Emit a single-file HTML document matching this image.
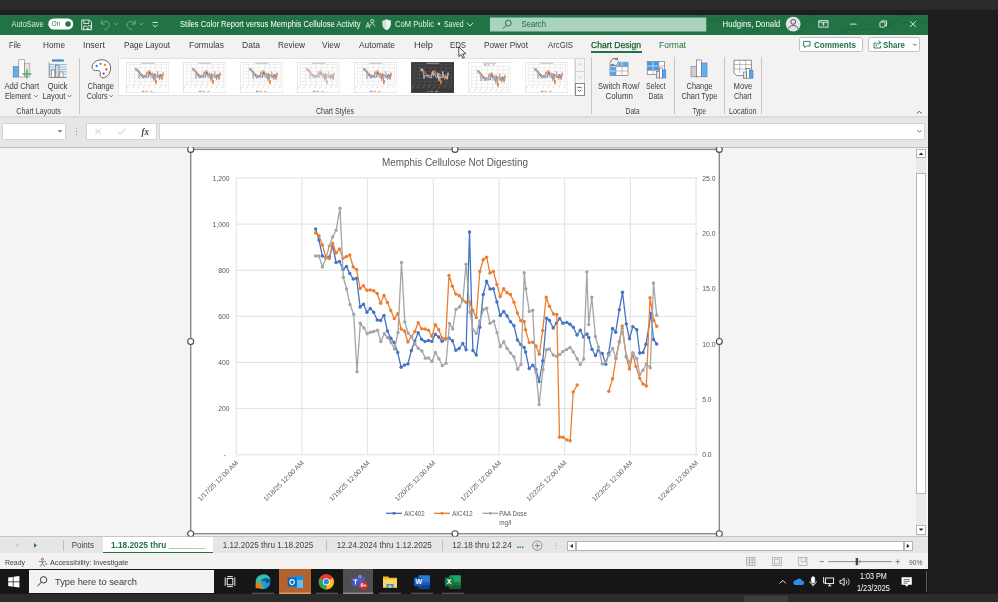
<!DOCTYPE html>
<html lang="en"><head><meta charset="utf-8"><title>Stiles Color Report versus Memphis Cellulose Activity - Excel</title>
<style>
html,body{margin:0;padding:0;}
body{width:998px;height:602px;overflow:hidden;background:#1e1e1e;position:relative;font-family:"Liberation Sans",sans-serif;}
.abs{position:absolute;}
.t{position:absolute;white-space:pre;display:inline-block;transform-origin:0 50%;}
div{position:absolute;box-sizing:border-box;}
</style></head><body>
<!-- desktop / outer frame -->
<div style="left:0;top:0;width:998px;height:9.7px;background:#2a2a2a"></div>
<div style="left:0;top:9.7px;width:998px;height:5px;background:#1e1e1e"></div>
<div style="left:928px;top:14.5px;width:70px;height:580px;background:#1e1e1e"></div>
<div style="left:0;top:594px;width:998px;height:8px;background:#2b2b2b"></div>
<div style="left:744px;top:596px;width:44px;height:6px;background:#3c3c3c"></div>
<!-- excel window -->
<div style="left:0;top:14.5px;width:928px;height:20.2px;background:#217346"></div>
<div style="left:0;top:34.7px;width:928px;height:81.5px;background:#f3f2f1"></div>
<div style="left:0;top:116.2px;width:928px;height:2px;background:linear-gradient(#d8d8d8,#e2e2e2)"></div>
<div style="left:0;top:118.2px;width:928px;height:29px;background:#e6e6e6"></div>
<div style="left:0;top:146.6px;width:928px;height:1px;background:#bdbdbd"></div>
<div style="left:0;top:147.6px;width:928px;height:389px;background:#f4f4f4"></div>
<div style="left:0;top:536.2px;width:928px;height:1px;background:#c6c6c6"></div>
<div style="left:0;top:537.2px;width:928px;height:16px;background:#e6e6e6"></div>
<div style="left:0;top:553.2px;width:928px;height:16px;background:#f3f2f1"></div>
<div style="left:0;top:569.2px;width:928px;height:24.8px;background:#161616"></div>
<!-- ===== title bar ===== -->
<svg class="abs" style="left:0;top:14.5px" width="928" height="20.2" viewBox="0 14.5 928 20.2">
 <g fill="none" stroke="#1d6a3f" stroke-width="1.2" opacity="0.9">
  <path d="M745 34.7 L760 27 L800 27 L815 14.5"/><path d="M835 34.7 L850 29 L880 29 L905 14.5"/><path d="M870 34.7 L895 22 L928 22"/><path d="M700 14.5 L712 20 L745 20"/>
 </g>
 <!-- autosave toggle -->
 <rect x="48" y="18" width="25" height="11" rx="5.5" fill="#fff"/><circle cx="67.8" cy="23.5" r="2.7" fill="#217346"/>
 <!-- save -->
 <g fill="none" stroke="#e6f0ea" stroke-width="0.9"><path d="M81.5 19.5 H89.3 L91.3 21.5 V29.2 H81.5 Z"/><path d="M83.6 19.5 V23 H88.6 V19.5"/><path d="M83.6 29.2 V25.6 H86.5"/><path d="M87 26.2 a2.2 2.2 0 0 1 4 0.2 M91.3 24.7 v1.9 h-1.9 M91 28 a2.2 2.2 0 0 1 -4 -0.2 M86.8 29.6 v-1.9 h1.9"/></g>
 <!-- undo / redo -->
 <g fill="none" stroke="#74aa8b" stroke-width="1"><path d="M101 19.8 V23.6 H104.8"/><path d="M101.2 23.4 C103.5 19.8 108.8 20.4 109.2 24.2 C109.4 26.4 107.4 27.6 104 29.6"/><path d="M113.8 22.6 l1.8 1.8 l1.8 -1.8"/>
 <path d="M135 19.8 V23.6 H131.2"/><path d="M134.8 23.4 C132.5 19.8 127.2 20.4 126.8 24.2 C126.6 26.4 128.6 27.6 132 29.6"/><path d="M139.2 22.6 l1.8 1.8 l1.8 -1.8"/></g>
 <g fill="none" stroke="#e6f0ea" stroke-width="0.9"><path d="M152.3 22 h5.4"/><path d="M152.6 24.2 l2.4 2.4 l2.4 -2.4"/></g>
 <!-- share people -->
 <g fill="none" stroke="#e6f0ea" stroke-width="0.8"><circle cx="372.2" cy="20.6" r="1.6"/><path d="M369.6 26 c0 -3.6 5.2 -3.6 5.2 0"/><path d="M365.8 27.6 l2 -5.6 l2 5.6 M366.6 25.8 h2.4"/></g>
 <!-- shield -->
 <path d="M386.4 18.8 c1.4 1 2.8 1.3 4.2 1.3 v4 c0 2.6 -1.8 4.6 -4.2 5.6 c-2.4 -1 -4.2 -3 -4.2 -5.6 v-4 c1.4 0 2.8 -0.3 4.2 -1.3 z" fill="#cfe3d7"/>
 <path d="M386.4 18.8 c1.4 1 2.8 1.3 4.2 1.3 v4 c0 2.6 -1.8 4.6 -4.2 5.6 z" fill="#eef6f1"/>
 <path d="M466.8 22.3 l3.2 3.2 l3.2 -3.2" fill="none" stroke="#e6f0ea" stroke-width="0.9"/>
 <!-- search -->
 <rect x="490" y="17" width="216.4" height="14" fill="#a9d3bc"/>
 <g fill="none" stroke="#1e6a40" stroke-width="0.9"><circle cx="508.4" cy="22.6" r="2.9"/><path d="M506.3 24.8 l-3.4 3.6"/></g>
 <!-- avatar -->
 <circle cx="793.4" cy="23.6" r="7.4" fill="#e3e3e3"/><g fill="none" stroke="#444" stroke-width="0.9"><circle cx="793.4" cy="21.4" r="2.4"/><path d="M788.8 28.4 c0.6 -4.6 8.6 -4.6 9.2 0"/></g>
 <!-- ribbon display -->
 <g fill="none" stroke="#e6f0ea" stroke-width="0.9"><rect x="819" y="20.2" width="9.2" height="6.4"/><path d="M819 21.8 h9.2"/><path d="M823.6 25.4 v-2.6 M822.3 23.9 l1.3 -1.3 l1.3 1.3"/></g>
 <!-- min / restore / close -->
 <g fill="none" stroke="#e6f0ea" stroke-width="0.9"><path d="M850.2 23.6 h6.6"/><rect x="880.2" y="21.6" width="5" height="5" rx="0.8"/><path d="M881.8 21.6 v-1.2 h5 v5 h-1.4"/><path d="M910.2 20.6 l6 6 M916.2 20.6 l-6 6"/></g>
</svg>
<!-- ===== menu bar ===== -->
<div style="left:591px;top:50.8px;width:50.6px;height:1.8px;background:#217346"></div>
<div style="left:798.7px;top:36.8px;width:64px;height:15.6px;background:#fff;border:1px solid #c2c0be;border-radius:2.5px"></div>
<div style="left:868px;top:36.8px;width:52.4px;height:15.6px;background:#fff;border:1px solid #c2c0be;border-radius:2.5px"></div>
<svg class="abs" style="left:798px;top:36px" width="126" height="18" viewBox="798 36 126 18">
 <path d="M803.6 41.4 h6.4 v4.6 h-3.6 l-1.6 1.6 v-1.6 h-1.2 z" fill="none" stroke="#217346" stroke-width="0.9" stroke-linejoin="round"/>
 <g fill="none" stroke="#217346" stroke-width="0.9"><path d="M876.4 43 h-2.4 v5 h6.6 v-2.2"/><path d="M876 46.4 c0.4 -2.6 2 -3.8 4.6 -3.8 M878.8 40.6 l2 2 l-2 2"/></g>
 <path d="M913.2 43.8 l1.7 1.7 l1.7 -1.7" fill="none" stroke="#217346" stroke-width="0.9"/>
</svg>
<!-- ===== ribbon ===== -->
<div style="left:79.3px;top:57.5px;width:1px;height:56.2px;background:#c8c6c4"></div>
<div style="left:591px;top:57px;width:1px;height:56.6px;background:#c8c6c4"></div>
<div style="left:674px;top:57px;width:1px;height:56.6px;background:#c8c6c4"></div>
<div style="left:723.6px;top:57px;width:1px;height:56.6px;background:#c8c6c4"></div>
<div style="left:760.6px;top:57px;width:1px;height:56.6px;background:#c8c6c4"></div>
<div style="left:118px;top:58px;width:456.5px;height:38px;background:#fff;border:0.5px solid #e4e2e0"></div>
<div style="left:574.5px;top:58px;width:10px;height:38px;background:#f6f5f4;border:0.5px solid #d6d4d2"></div>
<div style="left:574.5px;top:70.6px;width:10px;height:0.6px;background:#d6d4d2"></div>
<div style="left:574.5px;top:83.4px;width:10px;height:12.6px;background:#fff;border:0.7px solid #8a8886"></div>
<svg class="abs" style="left:0;top:55px" width="928" height="62" viewBox="0 55 928 62">
 <g fill="none" stroke-width="0.8"><path d="M577.6 65.4 l1.9 -1.9 l1.9 1.9" stroke="#bdbbb9"/><path d="M577.6 76.4 l1.9 1.9 l1.9 -1.9" stroke="#bdbbb9"/><path d="M577.3 87.4 h4.4" stroke="#444"/><path d="M577.5 89.6 l2 2 l2 -2" stroke="#444"/></g>
 <!-- chevrons on labels -->
 <g fill="none" stroke="#4a4a4a" stroke-width="0.8"><path d="M34.2 95.2 l1.7 1.7 l1.7 -1.7"/><path d="M67.8 95.2 l1.7 1.7 l1.7 -1.7"/><path d="M109.6 95.2 l1.7 1.7 l1.7 -1.7"/><path d="M916.9 113.6 l2.4 -2.4 l2.4 2.4" stroke-width="0.9"/></g>
 <!-- Add Chart Element -->
 <rect x="13.2" y="66.6" width="5.6" height="10.4" fill="#69afe5" stroke="#2b7cd3" stroke-width="0.6"/>
 <rect x="24.4" y="63.4" width="5.4" height="13.6" fill="#e1e1e1" stroke="#9a9a9a" stroke-width="0.6"/>
 <rect x="18.8" y="59.8" width="5.6" height="17.2" fill="#fff" stroke="#7a7a7a" stroke-width="0.6"/>
 <path d="M26.9 69.6 v8.8 M22.5 74 h8.8" stroke="#4ea66a" stroke-width="1.5" fill="none"/>
 <!-- Quick Layout -->
 <rect x="52" y="59.4" width="11.8" height="2.2" fill="#3f8ad8"/>
 <g stroke="#6aaeea" stroke-width="0.8" fill="none"><path d="M49.5 64.6 h17.2 M49.5 67 h17.2 M49.5 69.4 h17.2 M49.5 71.8 h17.2 M49.5 74.2 h17.2"/></g>
 <path d="M49.2 62.6 v14.8 h17.8" stroke="#6f6f6f" stroke-width="0.8" fill="none"/>
 <rect x="51.6" y="70" width="3.2" height="7.2" fill="#fff" stroke="#6f6f6f" stroke-width="0.6"/><rect x="55.6" y="65.2" width="3.4" height="12" fill="#d8d8d8" stroke="#6f6f6f" stroke-width="0.6"/><rect x="59.8" y="72" width="3.2" height="5.2" fill="#fff" stroke="#6f6f6f" stroke-width="0.6"/>
 <!-- palette -->
 <path d="M101.8 59.8 c5.4 0 8.8 3.6 8.8 8.2 c0 4.8 -3.4 9.8 -7.6 9.8 c-2.6 0 -3.4 -2 -2.8 -4 c0.6 -2.2 -0.6 -3.4 -2.6 -3.2 c-3 0.4 -5.6 -0.8 -5.6 -3.6 c0 -4 4.4 -7.2 9.800 -7.200 z" fill="#fff" stroke="#555" stroke-width="0.9"/>
 <circle cx="96.600" cy="66" r="1.15" fill="#2f7de1"/><circle cx="100.600" cy="63.800" r="1.15" fill="#3ca24c"/><circle cx="105" cy="65" r="1.15" fill="#ef8b23"/><circle cx="106.400" cy="69.400" r="1.15" fill="#e23a3a"/><circle cx="103.600" cy="73.600" r="1.15" fill="#8e2fb8"/>
 <!-- Switch Row/Column -->
 <rect x="610" y="62.2" width="18" height="13.2" fill="#fff" stroke="#5f5f5f" stroke-width="0.6"/>
 <rect x="610" y="62.200" width="18" height="4.400" fill="#5ea6e6"/><rect x="610" y="62.2" width="6" height="13.2" fill="#5ea6e6"/>
 <g stroke="#fff" stroke-width="0.6"><path d="M616 62.2 v4.4 M622 62.2 v4.4 M610 66.600 h6 M610 71 h6"/></g>
 <g stroke="#7c7c7c" stroke-width="0.5"><path d="M622 66.6 v8.8 M616 71 h12 M616 66.6 h12 M616 66.6 v8.8"/></g>
 <circle cx="614.6" cy="62" r="4.6" fill="#f3f2f1"/>
 <g fill="none" stroke="#4f4f4f" stroke-width="0.8"><path d="M610.8 62.6 a3.800 3.800 0 0 1 6.400 -3.200 M617.400 57.400 v2.200 h-2.200"/><path d="M618.400 61.400 a3.800 3.800 0 0 1 -6.400 3.200 M611.800 66.600 v-2.200 h2.200"/></g>
 <!-- Select Data -->
 <rect x="647.200" y="61.600" width="17.400" height="13" fill="#fff" stroke="#5f5f5f" stroke-width="0.6"/>
 <rect x="647.200" y="61.6" width="11.600" height="8.700" fill="#4a98e0"/>
 <g stroke="#fff" stroke-width="0.6"><path d="M653 61.600 v8.700 M647.200 66 h11.600"/></g>
 <g stroke="#7c7c7c" stroke-width="0.5"><path d="M658.800 61.600 v13 M653 70.300 v4.300 M647.200 70.300 h17.400 M658.800 66 h5.800"/></g>
 <rect x="656.400" y="71.600" width="3" height="6.400" fill="#e6e6e6" stroke="#5f5f5f" stroke-width="0.6"/><rect x="659.400" y="68" width="3.200" height="10" fill="#fff" stroke="#5f5f5f" stroke-width="0.6"/><rect x="662.600" y="70" width="3.200" height="8" fill="#5ea6e6" stroke="#2b7cd3" stroke-width="0.6"/>
 <!-- Change Chart Type -->
 <rect x="691" y="66.400" width="5.400" height="10.400" fill="#cfcfcf" stroke="#7c7c7c" stroke-width="0.6"/><rect x="696.400" y="60" width="5.200" height="16.800" fill="#fff" stroke="#5f5f5f" stroke-width="0.6"/><rect x="701.600" y="63" width="5.400" height="13.800" fill="#69afe5" stroke="#2b7cd3" stroke-width="0.6"/>
 <!-- Move Chart -->
 <path d="M734 60.200 h17.400 v15.400 h-14.800 l-2.600 -2.600 z" fill="#fff" stroke="#5f5f5f" stroke-width="0.7"/>
 <g stroke="#7c7c7c" stroke-width="0.5"><path d="M734 64.600 h17.400 M734 69 h17.400 M739.800 60.200 v13 M745.600 60.200 v10"/></g>
 <rect x="743.600" y="72" width="3" height="6.200" fill="#e6e6e6" stroke="#5f5f5f" stroke-width="0.6"/><rect x="746.600" y="68.400" width="3.200" height="9.800" fill="#fff" stroke="#5f5f5f" stroke-width="0.6"/><rect x="749.800" y="70.400" width="3.200" height="7.800" fill="#5ea6e6" stroke="#2b7cd3" stroke-width="0.6"/>
</svg>
<!-- ===== formula bar ===== -->
<div style="left:1.6px;top:123.3px;width:64.6px;border-radius:1.5px;height:17px;background:#fff;border:0.7px solid #d4d4d4"></div>
<div style="left:86.2px;top:123.3px;width:71px;height:17px;background:#fff;border:0.7px solid #d4d4d4"></div>
<div style="left:159.2px;top:123.3px;width:765.4px;height:17px;background:#fff;border:0.7px solid #d4d4d4"></div>
<svg class="abs" style="left:0;top:118px" width="928" height="29" viewBox="0 118 928 29">
 <path d="M57.800 130.200 h4.400 l-2.200 2.400 z" fill="#666"/>
 <g fill="#8a8a8a"><circle cx="76.600" cy="128.200" r="0.55"/><circle cx="76.600" cy="131.400" r="0.55"/><circle cx="76.600" cy="134.600" r="0.55"/></g>
 <g fill="none" stroke="#b9b9b9" stroke-width="0.8"><path d="M95.400 128.800 l5.400 5.400 M100.800 128.800 l-5.400 5.400"/><path d="M118.200 131.800 l2.200 2.400 l4.800 -5.400"/></g>
 <path d="M917.400 130.200 l2 2 l2 -2" fill="none" stroke="#555" stroke-width="0.9"/>
</svg>
<!-- ===== vertical scrollbar ===== -->
<div style="left:916.4px;top:148.6px;width:9.4px;height:387px;background:#e9e9e9"></div>
<div style="left:916.4px;top:149.2px;width:9.4px;height:9.2px;background:#fff;border:0.6px solid #b5b5b5"></div>
<div style="left:916.4px;top:172.6px;width:9.4px;height:321.8px;background:#fff;border:0.6px solid #b5b5b5"></div>
<div style="left:916.4px;top:525.2px;width:9.4px;height:9.600px;background:#fff;border:0.6px solid #b5b5b5"></div>
<svg class="abs" style="left:914px;top:148px" width="14" height="390" viewBox="914 148 14 390"><path d="M918.800 155 h4.600 l-2.300 -2.500 z M918.800 528.600 h4.600 l-2.300 2.500 z" fill="#222"/></svg>
<!-- ===== sheet tabs ===== -->
<div style="left:103.3px;top:537.2px;width:110px;height:16px;background:#fff;border-bottom:1.6px solid #217346"></div>
<div style="left:62.5px;top:539.6px;width:0.8px;height:11.4px;background:#bcbcbc"></div>
<div style="left:326.3px;top:539.6px;width:0.8px;height:11.4px;background:#bcbcbc"></div>
<div style="left:442.4px;top:539.6px;width:0.8px;height:11.4px;background:#bcbcbc"></div>
<div style="left:576px;top:541.1px;width:327.6px;height:9.7px;background:#fff;border:0.6px solid #b5b5b5"></div>
<div style="left:566.7px;top:541.1px;width:9.3px;height:9.7px;background:#fff;border:0.6px solid #b5b5b5"></div>
<div style="left:903.6px;top:541.1px;width:9.3px;height:9.7px;background:#fff;border:0.6px solid #b5b5b5"></div>
<svg class="abs" style="left:0;top:537px" width="928" height="33" viewBox="0 537 928 33">
 <path d="M18.200 543.200 l-2.600 2.200 l2.600 2.200 z" fill="#c2c2c2"/><path d="M34 543 l2.800 2.400 l-2.800 2.400 z" fill="#217346"/>
 <circle cx="537.300" cy="545.600" r="4.700" fill="none" stroke="#777" stroke-width="0.8"/><path d="M534.700 545.600 h5.200 M537.300 543 v5.200" stroke="#777" stroke-width="0.8"/>
 <g fill="#9a9a9a"><circle cx="556" cy="543" r="0.5"/><circle cx="556" cy="545.600" r="0.5"/><circle cx="556" cy="548.200" r="0.5"/></g>
 <path d="M572.800 543.800 v4.400 l-2.600 -2.200 z M906.800 543.800 v4.400 l2.600 -2.200 z" fill="#222"/>
 <!-- status icons -->
 <g fill="none" stroke="#555" stroke-width="0.75"><circle cx="42.4" cy="559.3" r="1.05"/><path d="M38.8 561.3 c2.4 0.7 4.8 0.7 7.2 0 M42.400 561.700 v1.800 l-2.400 3.100 M42.400 563.500 l2.400 3.100"/><path d="M45.200 563.200 l1.800 1.800 M47 563.200 l-1.800 1.800" stroke-width="0.6"/></g>
 <g fill="none" stroke="#a2a2a2" stroke-width="0.7"><rect x="746.600" y="557.400" width="8.400" height="8"/><path d="M749.400 557.400 v8 M752.200 557.400 v8 M746.600 560 h8.400 M746.600 562.800 h8.400"/>
 <rect x="772.400" y="557.400" width="9" height="8"/><rect x="774.400" y="559.200" width="5" height="4.600"/>
 <rect x="798.400" y="557.400" width="8.600" height="8"/><path d="M801.400 557.400 v4.400 h4 v-4.400"/></g>
 <g stroke="#666" stroke-width="0.7" fill="none"><path d="M819.600 561.600 h4.400"/><path d="M828 561.600 h64"/><path d="M895.400 561.600 h4.600 M897.700 559.300 v4.600"/></g>
 <rect x="855.700" y="558" width="2.400" height="7.200" fill="#444"/><path d="M860 559.800 v3.600" stroke="#666" stroke-width="0.6"/>
</svg>
<!-- ===== taskbar ===== -->
<div style="left:29.2px;top:569.6px;width:185.300px;height:23.4px;background:#f3f3f3"></div>
<div style="left:279.4px;top:569.2px;width:31.4px;height:24.800px;background:#b4622e"></div>
<div style="left:343px;top:569.2px;width:30.4px;height:24.800px;background:#4f4f4f"></div>
<div style="left:926px;top:571px;width:0.8px;height:21px;background:#5a5a5a"></div>
<svg class="abs" style="left:0;top:569px" width="928" height="25" viewBox="0 569 928 25">
 <g fill="#fff"><path d="M8.200 577.600 l4.600 -0.650 v4.500 h-4.600 z M13.500 576.850 l5.900 -0.850 v5.450 h-5.900 z M8.200 582.150 h4.600 v4.500 l-4.600 -0.650 z M13.500 582.150 h5.900 v5.450 l-5.900 -0.850 z"/></g>
 <g fill="none" stroke="#3a3a3a" stroke-width="1"><circle cx="43.600" cy="579.800" r="3.200"/><path d="M41.300 582.200 l-3.800 4"/></g>
 <!-- task view -->
 <g fill="none" stroke="#fff" stroke-width="0.9"><rect x="227.200" y="578.400" width="5.600" height="6.400"/><path d="M225.200 577.400 v8.400 M234.800 577.400 v8.400 M227.200 576.600 h5.600 M227.200 586.600 h5.600"/></g>
 <!-- edge -->
 <circle cx="263" cy="581.800" r="7.400" fill="#1b9de2"/><path d="M255.800 583 c0 -5 4 -8.600 8.400 -8.600 c3.800 0 6.400 2.600 6.200 5.600 c-2 -2.400 -8 -2.600 -9.600 1.600 c-1 2.600 0.400 5.600 3 6.800 c-4 0.600 -8 -1.800 -8 -5.400 z" fill="#35c1a0"/><path d="M260.800 581.600 c1.600 -4.200 7.600 -4 9.600 -1.600 c0 2.400 -2 3.600 -4.600 3.200 c0.600 -1.600 -1 -2.800 -2.600 -2.400 c-1.200 0.200 -2 0.400 -2.400 0.800 z" fill="#0c59a4"/>
 <rect x="255.600" y="583.400" width="7" height="4.800" rx="0.6" fill="#d9861a"/><rect x="257.600" y="582.200" width="3" height="1.600" fill="none" stroke="#d9861a" stroke-width="0.8"/>
 <!-- outlook -->
 <rect x="292.600" y="575.400" width="10.400" height="12.400" rx="1" fill="#1a8fe0"/><rect x="297" y="580" width="6" height="7.800" fill="#5cc0f4"/><rect x="287.600" y="577.600" width="9" height="9" rx="1" fill="#0b64b8"/><ellipse cx="292.100" cy="582.100" rx="2.200" ry="2.500" fill="none" stroke="#fff" stroke-width="1.100"/>
 <!-- chrome -->
 <circle cx="326.300" cy="581.800" r="7.600" fill="#e33b2e"/><path d="M326.300 581.800 L319.700 578 A7.600 7.600 0 0 0 326.600 589.400 Z" fill="#2da94f"/><path d="M326.300 581.800 L326.600 589.400 A7.600 7.600 0 0 0 332.900 578 Z" fill="#fcc31e"/><path d="M319.700 578 A7.600 7.600 0 0 1 332.900 578 L326.300 578 Z" fill="#e33b2e"/><circle cx="326.300" cy="581.800" r="3.500" fill="#fff"/><circle cx="326.300" cy="581.800" r="2.700" fill="#3b7ded"/>
 <!-- teams -->
 <circle cx="360" cy="576.800" r="2" fill="#7b83eb"/><circle cx="364.200" cy="578" r="1.500" fill="#5059c9"/><rect x="356.600" y="579" width="8" height="8" rx="1.600" fill="#5059c9"/><rect x="351.400" y="577.800" width="8.200" height="8.200" rx="1" fill="#4b53bc"/><path d="M353.400 580 h4.200 M355.500 580 v4.600" stroke="#fff" stroke-width="1" fill="none"/>
 <circle cx="363.600" cy="585.800" r="4.300" fill="#c8302e"/>
 <!-- explorer -->
 <path d="M383 576.400 h5 l1.400 1.400 h7.600 v9.800 h-14 z" fill="#f4b92a"/><rect x="383" y="579.400" width="14" height="8.200" fill="#fbd768"/><rect x="386.400" y="584" width="7.200" height="3.600" fill="#3c91e0"/><rect x="388.600" y="585.400" width="2.800" height="2.200" fill="#fbd768"/>
 <!-- word -->
 <rect x="418.600" y="575.200" width="11.400" height="13.200" rx="1" fill="#2b7cd3"/><rect x="418.600" y="581.800" width="11.400" height="3.400" fill="#185abd"/><rect x="418.600" y="585" width="11.400" height="3.400" fill="#103f91"/><rect x="414" y="577.600" width="8.600" height="8.600" rx="1" fill="#185abd"/>
 <!-- excel -->
 <rect x="449.400" y="575.200" width="11.400" height="13.200" rx="1" fill="#21a366"/><rect x="449.400" y="581.800" width="11.400" height="3.400" fill="#107c41"/><rect x="449.400" y="585" width="11.400" height="3.400" fill="#185c37"/><rect x="444.800" y="577.600" width="8.600" height="8.600" rx="1" fill="#107c41"/>
 <!-- underlines -->
 <g fill="#7a7a7a"><rect x="252" y="592.800" width="22" height="0.8"/><rect x="316" y="592.800" width="22" height="0.800"/><rect x="379" y="592.800" width="22" height="0.800"/><rect x="411" y="592.800" width="22" height="0.800"/><rect x="442" y="592.800" width="22" height="0.800"/></g>
 <rect x="279.400" y="592.600" width="31.400" height="1.200" fill="#e9a77c"/><rect x="343" y="592.600" width="30.400" height="1.200" fill="#9a9a9a"/>
 <!-- tray -->
 <path d="M779.800 583.400 l3 -3 l3 3" fill="none" stroke="#fff" stroke-width="0.9"/>
 <path d="M795.400 585 h6.600 a2.100 2.100 0 0 0 0.200 -4.200 a3 3 0 0 0 -5.600 -0.800 a2.500 2.500 0 0 0 -1.200 5 z" fill="#2a8ee6"/>
 <g fill="none" stroke="#fff" stroke-width="0.9"><rect x="811.600" y="576.800" width="3" height="6.200" rx="1.500" fill="#fff"/><path d="M810 581.400 c0 4 6.200 4 6.200 0 M813.100 584.400 v2"/>
 <rect x="825.600" y="578" width="8" height="5.600"/><path d="M828 585.800 h3.400 M829.600 583.600 v2.200 M823.600 577 v6 h2"/>
 <path d="M840 580.400 h1.800 l2.400 -2.200 v7.400 l-2.400 -2.200 h-1.800 z"/><path d="M846 579.800 c1 1 1 3.400 0 4.400 M847.800 578.400 c1.800 1.800 1.800 5.200 0 7" stroke-width="0.7"/></g>
 <path d="M901.600 577.200 h10.200 v7.600 h-3.400 l-1.700 1.900 l-1.700 -1.900 h-3.400 z" fill="#fff"/><path d="M903.600 579.600 h6.200 M903.600 581.400 h6.200 M903.600 583.200 h4" stroke="#161616" stroke-width="0.6"/>
</svg>
<span class="t" style="left:415.6px;top:578.3px;font-size:7px;line-height:7px;font-weight:bold;color:#fff">W</span>
<span class="t" style="left:446.8px;top:578.3px;font-size:7px;line-height:7px;font-weight:bold;color:#fff">X</span>
<span class="t" style="left:360.4px;top:583.2px;font-size:5.4px;line-height:5.4px;font-weight:bold;color:#fff">9+</span>

<svg class="abs" style="left:0;top:0;will-change:transform" width="998" height="602" viewBox="0 0 998 602"><rect x="190.7" y="149.4" width="528.6" height="384.3" fill="#fff" stroke="#8a8a8a" stroke-width="1.4"/><line x1="236.2" y1="178" x2="236.2" y2="454.8" stroke="#dedede" stroke-width="0.9"/><line x1="301.9" y1="178" x2="301.9" y2="454.8" stroke="#dedede" stroke-width="0.9"/><line x1="367.6" y1="178" x2="367.6" y2="454.8" stroke="#dedede" stroke-width="0.9"/><line x1="433.3" y1="178" x2="433.3" y2="454.8" stroke="#dedede" stroke-width="0.9"/><line x1="499.0" y1="178" x2="499.0" y2="454.8" stroke="#dedede" stroke-width="0.9"/><line x1="564.7" y1="178" x2="564.7" y2="454.8" stroke="#dedede" stroke-width="0.9"/><line x1="630.4" y1="178" x2="630.4" y2="454.8" stroke="#dedede" stroke-width="0.9"/><line x1="696.1" y1="178" x2="696.1" y2="454.8" stroke="#dedede" stroke-width="0.9"/><line x1="236.2" y1="178.0" x2="696.1" y2="178.0" stroke="#dedede" stroke-width="0.9"/><line x1="236.2" y1="224.1" x2="696.1" y2="224.1" stroke="#dedede" stroke-width="0.9"/><line x1="236.2" y1="270.3" x2="696.1" y2="270.3" stroke="#dedede" stroke-width="0.9"/><line x1="236.2" y1="316.4" x2="696.1" y2="316.4" stroke="#dedede" stroke-width="0.9"/><line x1="236.2" y1="362.5" x2="696.1" y2="362.5" stroke="#dedede" stroke-width="0.9"/><line x1="236.2" y1="408.6" x2="696.1" y2="408.6" stroke="#dedede" stroke-width="0.9"/><line x1="236.2" y1="454.8" x2="696.1" y2="454.8" stroke="#dedede" stroke-width="0.9"/><polyline points="315.6,229.0 319.0,240.0 322.4,256.0 325.9,257.5 329.3,257.0 332.7,246.0 336.1,262.5 339.5,261.5 343.0,269.5 346.4,266.4 349.8,273.5 353.2,279.0 356.6,278.3 360.1,307.0 363.5,304.3 366.9,312.3 370.3,308.5 373.7,312.2 377.2,320.0 380.6,320.5 384.0,315.4 387.4,331.0 390.8,338.3 394.3,342.5 397.7,352.5 401.1,367.2 404.5,365.0 407.9,364.0 411.4,350.5 414.8,341.0 418.2,332.8 421.6,339.3 425.0,341.5 428.5,340.5 431.9,341.4 435.3,334.3 438.7,337.0 442.1,341.3 445.6,339.0 449.0,338.0 452.4,340.7 455.8,350.3 459.2,348.5 462.7,343.5 466.1,349.7 469.5,232.0 472.9,350.5 476.3,355.0 479.8,327.2 483.2,294.5 486.6,281.3 490.0,289.0 493.4,288.8 496.9,302.0 500.3,315.5 503.7,311.5 507.1,316.0 510.5,321.8 514.0,325.7 517.4,340.0 520.8,344.5 524.2,347.5 525.6,352.0 529.2,368.5 532.8,365.3 536.0,369.5 539.1,381.6 542.8,361.0 546.5,318.2 549.5,320.5 553.2,328.0 556.5,323.0 559.7,318.6 563.0,323.2 566.7,322.4 570.0,324.3 573.3,327.3 577.0,335.0 580.3,330.3 583.5,337.0 587.0,334.0 588.8,337.5 592.0,349.3 595.4,355.5 598.2,350.5 602.3,353.5 605.8,364.2 608.6,353.4 612.5,328.4 615.7,332.2 619.3,309.7 622.5,292.2 626.3,324.0 629.5,338.8 632.8,326.6 636.8,329.8 639.7,353.0 643.0,352.5 646.0,344.3 651.0,313.3 653.5,339.5 656.7,344.0" fill="none" stroke="#4472c4" stroke-width="1.3" stroke-linejoin="round"/><circle cx="315.6" cy="229.0" r="1.7" fill="#4472c4"/><circle cx="319.0" cy="240.0" r="1.7" fill="#4472c4"/><circle cx="322.4" cy="256.0" r="1.7" fill="#4472c4"/><circle cx="325.9" cy="257.5" r="1.7" fill="#4472c4"/><circle cx="329.3" cy="257.0" r="1.7" fill="#4472c4"/><circle cx="332.7" cy="246.0" r="1.7" fill="#4472c4"/><circle cx="336.1" cy="262.5" r="1.7" fill="#4472c4"/><circle cx="339.5" cy="261.5" r="1.7" fill="#4472c4"/><circle cx="343.0" cy="269.5" r="1.7" fill="#4472c4"/><circle cx="346.4" cy="266.4" r="1.7" fill="#4472c4"/><circle cx="349.8" cy="273.5" r="1.7" fill="#4472c4"/><circle cx="353.2" cy="279.0" r="1.7" fill="#4472c4"/><circle cx="356.6" cy="278.3" r="1.7" fill="#4472c4"/><circle cx="360.1" cy="307.0" r="1.7" fill="#4472c4"/><circle cx="363.5" cy="304.3" r="1.7" fill="#4472c4"/><circle cx="366.9" cy="312.3" r="1.7" fill="#4472c4"/><circle cx="370.3" cy="308.5" r="1.7" fill="#4472c4"/><circle cx="373.7" cy="312.2" r="1.7" fill="#4472c4"/><circle cx="377.2" cy="320.0" r="1.7" fill="#4472c4"/><circle cx="380.6" cy="320.5" r="1.7" fill="#4472c4"/><circle cx="384.0" cy="315.4" r="1.7" fill="#4472c4"/><circle cx="387.4" cy="331.0" r="1.7" fill="#4472c4"/><circle cx="390.8" cy="338.3" r="1.7" fill="#4472c4"/><circle cx="394.3" cy="342.5" r="1.7" fill="#4472c4"/><circle cx="397.7" cy="352.5" r="1.7" fill="#4472c4"/><circle cx="401.1" cy="367.2" r="1.7" fill="#4472c4"/><circle cx="404.5" cy="365.0" r="1.7" fill="#4472c4"/><circle cx="407.9" cy="364.0" r="1.7" fill="#4472c4"/><circle cx="411.4" cy="350.5" r="1.7" fill="#4472c4"/><circle cx="414.8" cy="341.0" r="1.7" fill="#4472c4"/><circle cx="418.2" cy="332.8" r="1.7" fill="#4472c4"/><circle cx="421.6" cy="339.3" r="1.7" fill="#4472c4"/><circle cx="425.0" cy="341.5" r="1.7" fill="#4472c4"/><circle cx="428.5" cy="340.5" r="1.7" fill="#4472c4"/><circle cx="431.9" cy="341.4" r="1.7" fill="#4472c4"/><circle cx="435.3" cy="334.3" r="1.7" fill="#4472c4"/><circle cx="438.7" cy="337.0" r="1.7" fill="#4472c4"/><circle cx="442.1" cy="341.3" r="1.7" fill="#4472c4"/><circle cx="445.6" cy="339.0" r="1.7" fill="#4472c4"/><circle cx="449.0" cy="338.0" r="1.7" fill="#4472c4"/><circle cx="452.4" cy="340.7" r="1.7" fill="#4472c4"/><circle cx="455.8" cy="350.3" r="1.7" fill="#4472c4"/><circle cx="459.2" cy="348.5" r="1.7" fill="#4472c4"/><circle cx="462.7" cy="343.5" r="1.7" fill="#4472c4"/><circle cx="466.1" cy="349.7" r="1.7" fill="#4472c4"/><circle cx="469.5" cy="232.0" r="1.7" fill="#4472c4"/><circle cx="472.9" cy="350.5" r="1.7" fill="#4472c4"/><circle cx="476.3" cy="355.0" r="1.7" fill="#4472c4"/><circle cx="479.8" cy="327.2" r="1.7" fill="#4472c4"/><circle cx="483.2" cy="294.5" r="1.7" fill="#4472c4"/><circle cx="486.6" cy="281.3" r="1.7" fill="#4472c4"/><circle cx="490.0" cy="289.0" r="1.7" fill="#4472c4"/><circle cx="493.4" cy="288.8" r="1.7" fill="#4472c4"/><circle cx="496.9" cy="302.0" r="1.7" fill="#4472c4"/><circle cx="500.3" cy="315.5" r="1.7" fill="#4472c4"/><circle cx="503.7" cy="311.5" r="1.7" fill="#4472c4"/><circle cx="507.1" cy="316.0" r="1.7" fill="#4472c4"/><circle cx="510.5" cy="321.8" r="1.7" fill="#4472c4"/><circle cx="514.0" cy="325.7" r="1.7" fill="#4472c4"/><circle cx="517.4" cy="340.0" r="1.7" fill="#4472c4"/><circle cx="520.8" cy="344.5" r="1.7" fill="#4472c4"/><circle cx="524.2" cy="347.5" r="1.7" fill="#4472c4"/><circle cx="525.6" cy="352.0" r="1.7" fill="#4472c4"/><circle cx="529.2" cy="368.5" r="1.7" fill="#4472c4"/><circle cx="532.8" cy="365.3" r="1.7" fill="#4472c4"/><circle cx="536.0" cy="369.5" r="1.7" fill="#4472c4"/><circle cx="539.1" cy="381.6" r="1.7" fill="#4472c4"/><circle cx="542.8" cy="361.0" r="1.7" fill="#4472c4"/><circle cx="546.5" cy="318.2" r="1.7" fill="#4472c4"/><circle cx="549.5" cy="320.5" r="1.7" fill="#4472c4"/><circle cx="553.2" cy="328.0" r="1.7" fill="#4472c4"/><circle cx="556.5" cy="323.0" r="1.7" fill="#4472c4"/><circle cx="559.7" cy="318.6" r="1.7" fill="#4472c4"/><circle cx="563.0" cy="323.2" r="1.7" fill="#4472c4"/><circle cx="566.7" cy="322.4" r="1.7" fill="#4472c4"/><circle cx="570.0" cy="324.3" r="1.7" fill="#4472c4"/><circle cx="573.3" cy="327.3" r="1.7" fill="#4472c4"/><circle cx="577.0" cy="335.0" r="1.7" fill="#4472c4"/><circle cx="580.3" cy="330.3" r="1.7" fill="#4472c4"/><circle cx="583.5" cy="337.0" r="1.7" fill="#4472c4"/><circle cx="587.0" cy="334.0" r="1.7" fill="#4472c4"/><circle cx="588.8" cy="337.5" r="1.7" fill="#4472c4"/><circle cx="592.0" cy="349.3" r="1.7" fill="#4472c4"/><circle cx="595.4" cy="355.5" r="1.7" fill="#4472c4"/><circle cx="598.2" cy="350.5" r="1.7" fill="#4472c4"/><circle cx="602.3" cy="353.5" r="1.7" fill="#4472c4"/><circle cx="605.8" cy="364.2" r="1.7" fill="#4472c4"/><circle cx="608.6" cy="353.4" r="1.7" fill="#4472c4"/><circle cx="612.5" cy="328.4" r="1.7" fill="#4472c4"/><circle cx="615.7" cy="332.2" r="1.7" fill="#4472c4"/><circle cx="619.3" cy="309.7" r="1.7" fill="#4472c4"/><circle cx="622.5" cy="292.2" r="1.7" fill="#4472c4"/><circle cx="626.3" cy="324.0" r="1.7" fill="#4472c4"/><circle cx="629.5" cy="338.8" r="1.7" fill="#4472c4"/><circle cx="632.8" cy="326.6" r="1.7" fill="#4472c4"/><circle cx="636.8" cy="329.8" r="1.7" fill="#4472c4"/><circle cx="639.7" cy="353.0" r="1.7" fill="#4472c4"/><circle cx="643.0" cy="352.5" r="1.7" fill="#4472c4"/><circle cx="646.0" cy="344.3" r="1.7" fill="#4472c4"/><circle cx="651.0" cy="313.3" r="1.7" fill="#4472c4"/><circle cx="653.5" cy="339.5" r="1.7" fill="#4472c4"/><circle cx="656.7" cy="344.0" r="1.7" fill="#4472c4"/><polyline points="315.6,233.0 319.0,235.8 322.4,245.0 325.9,257.0 329.3,258.6 332.7,243.4 336.1,253.0 339.5,249.0 343.0,258.2 346.4,256.6 349.8,255.0 353.2,267.0 356.6,269.6 360.1,288.5 363.5,285.8 366.9,290.3 370.3,290.0 373.7,290.8 377.2,293.5 380.6,303.2 384.0,295.5 387.4,302.5 390.8,310.4 394.3,318.5 397.7,313.6 401.1,329.0 404.5,331.0 407.9,342.0 411.4,336.5 414.8,331.5 418.2,322.8 421.6,328.8 425.0,329.0 428.5,330.3 431.9,336.3 435.3,324.6 438.7,329.7 442.1,338.0 445.6,338.8 449.0,275.4 452.4,286.3 455.8,294.0 459.2,295.5 462.7,300.0 466.1,302.3 469.5,302.0 472.9,310.5 476.3,317.5 479.8,271.5 483.2,259.8 486.6,257.2 490.0,273.0 493.4,271.4 496.9,284.5 500.3,296.5 503.7,288.8 507.1,292.8 510.5,294.5 514.0,302.3 517.4,313.0 520.8,320.7 524.2,321.4 525.5,329.8 529.2,342.6 532.7,342.2 536.0,346.0 539.3,354.3 542.7,330.5 546.2,297.3 549.5,306.3 553.5,314.0 556.8,314.5 559.5,437.2 562.9,437.2 566.9,439.9 570.2,440.8 573.2,392.0 577.2,385.0" fill="none" stroke="#ed7d31" stroke-width="1.3" stroke-linejoin="round"/><circle cx="315.6" cy="233.0" r="1.7" fill="#ed7d31"/><circle cx="319.0" cy="235.8" r="1.7" fill="#ed7d31"/><circle cx="322.4" cy="245.0" r="1.7" fill="#ed7d31"/><circle cx="325.9" cy="257.0" r="1.7" fill="#ed7d31"/><circle cx="329.3" cy="258.6" r="1.7" fill="#ed7d31"/><circle cx="332.7" cy="243.4" r="1.7" fill="#ed7d31"/><circle cx="336.1" cy="253.0" r="1.7" fill="#ed7d31"/><circle cx="339.5" cy="249.0" r="1.7" fill="#ed7d31"/><circle cx="343.0" cy="258.2" r="1.7" fill="#ed7d31"/><circle cx="346.4" cy="256.6" r="1.7" fill="#ed7d31"/><circle cx="349.8" cy="255.0" r="1.7" fill="#ed7d31"/><circle cx="353.2" cy="267.0" r="1.7" fill="#ed7d31"/><circle cx="356.6" cy="269.6" r="1.7" fill="#ed7d31"/><circle cx="360.1" cy="288.5" r="1.7" fill="#ed7d31"/><circle cx="363.5" cy="285.8" r="1.7" fill="#ed7d31"/><circle cx="366.9" cy="290.3" r="1.7" fill="#ed7d31"/><circle cx="370.3" cy="290.0" r="1.7" fill="#ed7d31"/><circle cx="373.7" cy="290.8" r="1.7" fill="#ed7d31"/><circle cx="377.2" cy="293.5" r="1.7" fill="#ed7d31"/><circle cx="380.6" cy="303.2" r="1.7" fill="#ed7d31"/><circle cx="384.0" cy="295.5" r="1.7" fill="#ed7d31"/><circle cx="387.4" cy="302.5" r="1.7" fill="#ed7d31"/><circle cx="390.8" cy="310.4" r="1.7" fill="#ed7d31"/><circle cx="394.3" cy="318.5" r="1.7" fill="#ed7d31"/><circle cx="397.7" cy="313.6" r="1.7" fill="#ed7d31"/><circle cx="401.1" cy="329.0" r="1.7" fill="#ed7d31"/><circle cx="404.5" cy="331.0" r="1.7" fill="#ed7d31"/><circle cx="407.9" cy="342.0" r="1.7" fill="#ed7d31"/><circle cx="411.4" cy="336.5" r="1.7" fill="#ed7d31"/><circle cx="414.8" cy="331.5" r="1.7" fill="#ed7d31"/><circle cx="418.2" cy="322.8" r="1.7" fill="#ed7d31"/><circle cx="421.6" cy="328.8" r="1.7" fill="#ed7d31"/><circle cx="425.0" cy="329.0" r="1.7" fill="#ed7d31"/><circle cx="428.5" cy="330.3" r="1.7" fill="#ed7d31"/><circle cx="431.9" cy="336.3" r="1.7" fill="#ed7d31"/><circle cx="435.3" cy="324.6" r="1.7" fill="#ed7d31"/><circle cx="438.7" cy="329.7" r="1.7" fill="#ed7d31"/><circle cx="442.1" cy="338.0" r="1.7" fill="#ed7d31"/><circle cx="445.6" cy="338.8" r="1.7" fill="#ed7d31"/><circle cx="449.0" cy="275.4" r="1.7" fill="#ed7d31"/><circle cx="452.4" cy="286.3" r="1.7" fill="#ed7d31"/><circle cx="455.8" cy="294.0" r="1.7" fill="#ed7d31"/><circle cx="459.2" cy="295.5" r="1.7" fill="#ed7d31"/><circle cx="462.7" cy="300.0" r="1.7" fill="#ed7d31"/><circle cx="466.1" cy="302.3" r="1.7" fill="#ed7d31"/><circle cx="469.5" cy="302.0" r="1.7" fill="#ed7d31"/><circle cx="472.9" cy="310.5" r="1.7" fill="#ed7d31"/><circle cx="476.3" cy="317.5" r="1.7" fill="#ed7d31"/><circle cx="479.8" cy="271.5" r="1.7" fill="#ed7d31"/><circle cx="483.2" cy="259.8" r="1.7" fill="#ed7d31"/><circle cx="486.6" cy="257.2" r="1.7" fill="#ed7d31"/><circle cx="490.0" cy="273.0" r="1.7" fill="#ed7d31"/><circle cx="493.4" cy="271.4" r="1.7" fill="#ed7d31"/><circle cx="496.9" cy="284.5" r="1.7" fill="#ed7d31"/><circle cx="500.3" cy="296.5" r="1.7" fill="#ed7d31"/><circle cx="503.7" cy="288.8" r="1.7" fill="#ed7d31"/><circle cx="507.1" cy="292.8" r="1.7" fill="#ed7d31"/><circle cx="510.5" cy="294.5" r="1.7" fill="#ed7d31"/><circle cx="514.0" cy="302.3" r="1.7" fill="#ed7d31"/><circle cx="517.4" cy="313.0" r="1.7" fill="#ed7d31"/><circle cx="520.8" cy="320.7" r="1.7" fill="#ed7d31"/><circle cx="524.2" cy="321.4" r="1.7" fill="#ed7d31"/><circle cx="525.5" cy="329.8" r="1.7" fill="#ed7d31"/><circle cx="529.2" cy="342.6" r="1.7" fill="#ed7d31"/><circle cx="532.7" cy="342.2" r="1.7" fill="#ed7d31"/><circle cx="536.0" cy="346.0" r="1.7" fill="#ed7d31"/><circle cx="539.3" cy="354.3" r="1.7" fill="#ed7d31"/><circle cx="542.7" cy="330.5" r="1.7" fill="#ed7d31"/><circle cx="546.2" cy="297.3" r="1.7" fill="#ed7d31"/><circle cx="549.5" cy="306.3" r="1.7" fill="#ed7d31"/><circle cx="553.5" cy="314.0" r="1.7" fill="#ed7d31"/><circle cx="556.8" cy="314.5" r="1.7" fill="#ed7d31"/><circle cx="559.5" cy="437.2" r="1.7" fill="#ed7d31"/><circle cx="562.9" cy="437.2" r="1.7" fill="#ed7d31"/><circle cx="566.9" cy="439.9" r="1.7" fill="#ed7d31"/><circle cx="570.2" cy="440.8" r="1.7" fill="#ed7d31"/><circle cx="573.2" cy="392.0" r="1.7" fill="#ed7d31"/><circle cx="577.2" cy="385.0" r="1.7" fill="#ed7d31"/><polyline points="608.8,391.2 612.6,378.8 616.0,358.5 619.3,342.0 622.2,326.0 626.3,357.0 629.5,369.0 632.8,354.0 636.0,366.5 639.7,378.3 643.0,384.0 646.3,386.0 650.0,297.8 653.8,320.5 656.7,326.3" fill="none" stroke="#ed7d31" stroke-width="1.3" stroke-linejoin="round"/><circle cx="608.8" cy="391.2" r="1.7" fill="#ed7d31"/><circle cx="612.6" cy="378.8" r="1.7" fill="#ed7d31"/><circle cx="616.0" cy="358.5" r="1.7" fill="#ed7d31"/><circle cx="619.3" cy="342.0" r="1.7" fill="#ed7d31"/><circle cx="622.2" cy="326.0" r="1.7" fill="#ed7d31"/><circle cx="626.3" cy="357.0" r="1.7" fill="#ed7d31"/><circle cx="629.5" cy="369.0" r="1.7" fill="#ed7d31"/><circle cx="632.8" cy="354.0" r="1.7" fill="#ed7d31"/><circle cx="636.0" cy="366.5" r="1.7" fill="#ed7d31"/><circle cx="639.7" cy="378.3" r="1.7" fill="#ed7d31"/><circle cx="643.0" cy="384.0" r="1.7" fill="#ed7d31"/><circle cx="646.3" cy="386.0" r="1.7" fill="#ed7d31"/><circle cx="650.0" cy="297.8" r="1.7" fill="#ed7d31"/><circle cx="653.8" cy="320.5" r="1.7" fill="#ed7d31"/><circle cx="656.7" cy="326.3" r="1.7" fill="#ed7d31"/><polyline points="315.6,256.0 319.0,256.0 322.4,267.0 325.9,258.4 329.3,246.0 332.7,237.0 336.1,230.3 340.0,208.2 343.3,277.3 346.6,289.0 350.0,304.5 353.7,314.2 357.0,371.8 360.3,323.3 364.0,328.0 367.2,333.7 370.5,332.2 373.8,331.5 377.5,330.3 380.8,341.5 384.3,333.7 387.6,337.5 391.2,342.5 394.5,349.0 398.0,332.5 401.5,262.5 404.8,322.0 408.0,333.0 411.8,337.0 415.0,344.0 418.3,348.3 422.0,351.0 425.3,358.3 428.5,358.0 431.9,361.4 435.5,352.4 439.0,358.8 442.3,365.5 446.0,363.3 449.5,323.4 452.7,329.0 455.8,309.5 459.5,307.0 462.8,300.5 466.0,264.2 470.0,312.0 473.0,329.7 476.3,333.5 479.7,321.0 483.5,309.5 486.7,308.3 490.0,323.2 493.7,321.3 497.0,332.5 500.3,346.5 503.7,341.8 507.1,348.5 510.5,353.0 514.0,357.0 517.7,369.2 521.0,364.5 524.3,272.8 525.8,288.7 529.3,311.5 532.7,310.3 536.0,372.5 539.1,404.6 543.0,369.6 546.5,349.8 549.5,349.0 553.2,355.0 556.5,356.2 559.7,354.5 563.0,351.5 566.7,349.5 570.0,347.5 573.3,352.0 577.2,358.7 580.3,364.5 583.7,359.0 586.8,272.0 588.7,324.6 591.8,297.2 595.4,336.5 598.4,347.0 602.2,364.0 605.5,361.8 608.9,355.0 612.6,348.5 616.0,358.0 619.3,341.5 622.2,328.5 626.3,356.5 629.5,362.5 632.8,352.8 636.8,358.7 639.7,374.5 643.0,370.3 646.3,364.1 650.3,367.8 653.5,283.0 656.7,315.2" fill="none" stroke="#a5a5a5" stroke-width="1.3" stroke-linejoin="round"/><circle cx="315.6" cy="256.0" r="1.7" fill="#a5a5a5"/><circle cx="319.0" cy="256.0" r="1.7" fill="#a5a5a5"/><circle cx="322.4" cy="267.0" r="1.7" fill="#a5a5a5"/><circle cx="325.9" cy="258.4" r="1.7" fill="#a5a5a5"/><circle cx="329.3" cy="246.0" r="1.7" fill="#a5a5a5"/><circle cx="332.7" cy="237.0" r="1.7" fill="#a5a5a5"/><circle cx="336.1" cy="230.3" r="1.7" fill="#a5a5a5"/><circle cx="340.0" cy="208.2" r="1.7" fill="#a5a5a5"/><circle cx="343.3" cy="277.3" r="1.7" fill="#a5a5a5"/><circle cx="346.6" cy="289.0" r="1.7" fill="#a5a5a5"/><circle cx="350.0" cy="304.5" r="1.7" fill="#a5a5a5"/><circle cx="353.7" cy="314.2" r="1.7" fill="#a5a5a5"/><circle cx="357.0" cy="371.8" r="1.7" fill="#a5a5a5"/><circle cx="360.3" cy="323.3" r="1.7" fill="#a5a5a5"/><circle cx="364.0" cy="328.0" r="1.7" fill="#a5a5a5"/><circle cx="367.2" cy="333.7" r="1.7" fill="#a5a5a5"/><circle cx="370.5" cy="332.2" r="1.7" fill="#a5a5a5"/><circle cx="373.8" cy="331.5" r="1.7" fill="#a5a5a5"/><circle cx="377.5" cy="330.3" r="1.7" fill="#a5a5a5"/><circle cx="380.8" cy="341.5" r="1.7" fill="#a5a5a5"/><circle cx="384.3" cy="333.7" r="1.7" fill="#a5a5a5"/><circle cx="387.6" cy="337.5" r="1.7" fill="#a5a5a5"/><circle cx="391.2" cy="342.5" r="1.7" fill="#a5a5a5"/><circle cx="394.5" cy="349.0" r="1.7" fill="#a5a5a5"/><circle cx="398.0" cy="332.5" r="1.7" fill="#a5a5a5"/><circle cx="401.5" cy="262.5" r="1.7" fill="#a5a5a5"/><circle cx="404.8" cy="322.0" r="1.7" fill="#a5a5a5"/><circle cx="408.0" cy="333.0" r="1.7" fill="#a5a5a5"/><circle cx="411.8" cy="337.0" r="1.7" fill="#a5a5a5"/><circle cx="415.0" cy="344.0" r="1.7" fill="#a5a5a5"/><circle cx="418.3" cy="348.3" r="1.7" fill="#a5a5a5"/><circle cx="422.0" cy="351.0" r="1.7" fill="#a5a5a5"/><circle cx="425.3" cy="358.3" r="1.7" fill="#a5a5a5"/><circle cx="428.5" cy="358.0" r="1.7" fill="#a5a5a5"/><circle cx="431.9" cy="361.4" r="1.7" fill="#a5a5a5"/><circle cx="435.5" cy="352.4" r="1.7" fill="#a5a5a5"/><circle cx="439.0" cy="358.8" r="1.7" fill="#a5a5a5"/><circle cx="442.3" cy="365.5" r="1.7" fill="#a5a5a5"/><circle cx="446.0" cy="363.3" r="1.7" fill="#a5a5a5"/><circle cx="449.5" cy="323.4" r="1.7" fill="#a5a5a5"/><circle cx="452.7" cy="329.0" r="1.7" fill="#a5a5a5"/><circle cx="455.8" cy="309.5" r="1.7" fill="#a5a5a5"/><circle cx="459.5" cy="307.0" r="1.7" fill="#a5a5a5"/><circle cx="462.8" cy="300.5" r="1.7" fill="#a5a5a5"/><circle cx="466.0" cy="264.2" r="1.7" fill="#a5a5a5"/><circle cx="470.0" cy="312.0" r="1.7" fill="#a5a5a5"/><circle cx="473.0" cy="329.7" r="1.7" fill="#a5a5a5"/><circle cx="476.3" cy="333.5" r="1.7" fill="#a5a5a5"/><circle cx="479.7" cy="321.0" r="1.7" fill="#a5a5a5"/><circle cx="483.5" cy="309.5" r="1.7" fill="#a5a5a5"/><circle cx="486.7" cy="308.3" r="1.7" fill="#a5a5a5"/><circle cx="490.0" cy="323.2" r="1.7" fill="#a5a5a5"/><circle cx="493.7" cy="321.3" r="1.7" fill="#a5a5a5"/><circle cx="497.0" cy="332.5" r="1.7" fill="#a5a5a5"/><circle cx="500.3" cy="346.5" r="1.7" fill="#a5a5a5"/><circle cx="503.7" cy="341.8" r="1.7" fill="#a5a5a5"/><circle cx="507.1" cy="348.5" r="1.7" fill="#a5a5a5"/><circle cx="510.5" cy="353.0" r="1.7" fill="#a5a5a5"/><circle cx="514.0" cy="357.0" r="1.7" fill="#a5a5a5"/><circle cx="517.7" cy="369.2" r="1.7" fill="#a5a5a5"/><circle cx="521.0" cy="364.5" r="1.7" fill="#a5a5a5"/><circle cx="524.3" cy="272.8" r="1.7" fill="#a5a5a5"/><circle cx="525.8" cy="288.7" r="1.7" fill="#a5a5a5"/><circle cx="529.3" cy="311.5" r="1.7" fill="#a5a5a5"/><circle cx="532.7" cy="310.3" r="1.7" fill="#a5a5a5"/><circle cx="536.0" cy="372.5" r="1.7" fill="#a5a5a5"/><circle cx="539.1" cy="404.6" r="1.7" fill="#a5a5a5"/><circle cx="543.0" cy="369.6" r="1.7" fill="#a5a5a5"/><circle cx="546.5" cy="349.8" r="1.7" fill="#a5a5a5"/><circle cx="549.5" cy="349.0" r="1.7" fill="#a5a5a5"/><circle cx="553.2" cy="355.0" r="1.7" fill="#a5a5a5"/><circle cx="556.5" cy="356.2" r="1.7" fill="#a5a5a5"/><circle cx="559.7" cy="354.5" r="1.7" fill="#a5a5a5"/><circle cx="563.0" cy="351.5" r="1.7" fill="#a5a5a5"/><circle cx="566.7" cy="349.5" r="1.7" fill="#a5a5a5"/><circle cx="570.0" cy="347.5" r="1.7" fill="#a5a5a5"/><circle cx="573.3" cy="352.0" r="1.7" fill="#a5a5a5"/><circle cx="577.2" cy="358.7" r="1.7" fill="#a5a5a5"/><circle cx="580.3" cy="364.5" r="1.7" fill="#a5a5a5"/><circle cx="583.7" cy="359.0" r="1.7" fill="#a5a5a5"/><circle cx="586.8" cy="272.0" r="1.7" fill="#a5a5a5"/><circle cx="588.7" cy="324.6" r="1.7" fill="#a5a5a5"/><circle cx="591.8" cy="297.2" r="1.7" fill="#a5a5a5"/><circle cx="595.4" cy="336.5" r="1.7" fill="#a5a5a5"/><circle cx="598.4" cy="347.0" r="1.7" fill="#a5a5a5"/><circle cx="602.2" cy="364.0" r="1.7" fill="#a5a5a5"/><circle cx="605.5" cy="361.8" r="1.7" fill="#a5a5a5"/><circle cx="608.9" cy="355.0" r="1.7" fill="#a5a5a5"/><circle cx="612.6" cy="348.5" r="1.7" fill="#a5a5a5"/><circle cx="616.0" cy="358.0" r="1.7" fill="#a5a5a5"/><circle cx="619.3" cy="341.5" r="1.7" fill="#a5a5a5"/><circle cx="622.2" cy="328.5" r="1.7" fill="#a5a5a5"/><circle cx="626.3" cy="356.5" r="1.7" fill="#a5a5a5"/><circle cx="629.5" cy="362.5" r="1.7" fill="#a5a5a5"/><circle cx="632.8" cy="352.8" r="1.7" fill="#a5a5a5"/><circle cx="636.8" cy="358.7" r="1.7" fill="#a5a5a5"/><circle cx="639.7" cy="374.5" r="1.7" fill="#a5a5a5"/><circle cx="643.0" cy="370.3" r="1.7" fill="#a5a5a5"/><circle cx="646.3" cy="364.1" r="1.7" fill="#a5a5a5"/><circle cx="650.3" cy="367.8" r="1.7" fill="#a5a5a5"/><circle cx="653.5" cy="283.0" r="1.7" fill="#a5a5a5"/><circle cx="656.7" cy="315.2" r="1.7" fill="#a5a5a5"/><text x="229.5" y="180.5" font-size="6.8" text-anchor="end" font-family="Liberation Sans, sans-serif" fill="#595959">1,200</text><text x="229.5" y="226.6" font-size="6.8" text-anchor="end" font-family="Liberation Sans, sans-serif" fill="#595959">1,000</text><text x="229.5" y="272.8" font-size="6.8" text-anchor="end" font-family="Liberation Sans, sans-serif" fill="#595959">800</text><text x="229.5" y="318.9" font-size="6.8" text-anchor="end" font-family="Liberation Sans, sans-serif" fill="#595959">600</text><text x="229.5" y="365.0" font-size="6.8" text-anchor="end" font-family="Liberation Sans, sans-serif" fill="#595959">400</text><text x="229.5" y="411.1" font-size="6.8" text-anchor="end" font-family="Liberation Sans, sans-serif" fill="#595959">200</text><text x="226" y="457.3" font-size="6.8" text-anchor="end" font-family="Liberation Sans, sans-serif" fill="#595959">-</text><text x="702.2" y="180.5" font-size="6.8" font-family="Liberation Sans, sans-serif" fill="#595959">25.0</text><text x="702.2" y="235.9" font-size="6.8" font-family="Liberation Sans, sans-serif" fill="#595959">20.0</text><text x="702.2" y="291.2" font-size="6.8" font-family="Liberation Sans, sans-serif" fill="#595959">15.0</text><text x="702.2" y="346.6" font-size="6.8" font-family="Liberation Sans, sans-serif" fill="#595959">10.0</text><text x="702.2" y="401.9" font-size="6.8" font-family="Liberation Sans, sans-serif" fill="#595959">5.0</text><text x="702.2" y="457.3" font-size="6.8" font-family="Liberation Sans, sans-serif" fill="#595959">0.0</text><text x="238.7" y="463.5" font-size="6.9" text-anchor="end" transform="rotate(-45 238.7 463.5)" font-family="Liberation Sans, sans-serif" fill="#595959">1/17/25 12:00 AM</text><text x="304.4" y="463.5" font-size="6.9" text-anchor="end" transform="rotate(-45 304.4 463.5)" font-family="Liberation Sans, sans-serif" fill="#595959">1/18/25 12:00 AM</text><text x="370.1" y="463.5" font-size="6.9" text-anchor="end" transform="rotate(-45 370.1 463.5)" font-family="Liberation Sans, sans-serif" fill="#595959">1/19/25 12:00 AM</text><text x="435.8" y="463.5" font-size="6.9" text-anchor="end" transform="rotate(-45 435.8 463.5)" font-family="Liberation Sans, sans-serif" fill="#595959">1/20/25 12:00 AM</text><text x="501.5" y="463.5" font-size="6.9" text-anchor="end" transform="rotate(-45 501.5 463.5)" font-family="Liberation Sans, sans-serif" fill="#595959">1/21/25 12:00 AM</text><text x="567.2" y="463.5" font-size="6.9" text-anchor="end" transform="rotate(-45 567.2 463.5)" font-family="Liberation Sans, sans-serif" fill="#595959">1/22/25 12:00 AM</text><text x="632.9" y="463.5" font-size="6.9" text-anchor="end" transform="rotate(-45 632.9 463.5)" font-family="Liberation Sans, sans-serif" fill="#595959">1/23/25 12:00 AM</text><text x="698.6" y="463.5" font-size="6.9" text-anchor="end" transform="rotate(-45 698.6 463.5)" font-family="Liberation Sans, sans-serif" fill="#595959">1/24/25 12:00 AM</text><text x="455" y="165.6" font-size="10.4" text-anchor="middle" textLength="146" lengthAdjust="spacingAndGlyphs" font-family="Liberation Sans, sans-serif" fill="#595959">Memphis Cellulose Not Digesting</text><line x1="696.1" y1="178.0" x2="698" y2="178.0" stroke="#d0d0d0" stroke-width="0.8"/><line x1="696.1" y1="233.4" x2="698" y2="233.4" stroke="#d0d0d0" stroke-width="0.8"/><line x1="696.1" y1="288.7" x2="698" y2="288.7" stroke="#d0d0d0" stroke-width="0.8"/><line x1="696.1" y1="344.1" x2="698" y2="344.1" stroke="#d0d0d0" stroke-width="0.8"/><line x1="696.1" y1="399.4" x2="698" y2="399.4" stroke="#d0d0d0" stroke-width="0.8"/><line x1="696.1" y1="454.8" x2="698" y2="454.8" stroke="#d0d0d0" stroke-width="0.8"/><line x1="386" y1="513.3" x2="402" y2="513.3" stroke="#4472c4" stroke-width="1.3"/><circle cx="394" cy="513.3" r="1.5" fill="#4472c4"/><text x="404.2" y="515.6" font-size="6.4" textLength="20.5" lengthAdjust="spacingAndGlyphs" font-family="Liberation Sans, sans-serif" fill="#595959">AIC402</text><line x1="434" y1="513.3" x2="450" y2="513.3" stroke="#ed7d31" stroke-width="1.3"/><circle cx="442" cy="513.3" r="1.5" fill="#ed7d31"/><text x="452.2" y="515.6" font-size="6.4" textLength="20.5" lengthAdjust="spacingAndGlyphs" font-family="Liberation Sans, sans-serif" fill="#595959">AIC412</text><line x1="482.5" y1="513.3" x2="498.5" y2="513.3" stroke="#a5a5a5" stroke-width="1.3"/><circle cx="490.5" cy="513.3" r="1.5" fill="#a5a5a5"/><text x="499.3" y="515.6" font-size="6.4" textLength="27.5" lengthAdjust="spacingAndGlyphs" font-family="Liberation Sans, sans-serif" fill="#595959">PAA Dose</text><text x="499.3" y="524.6" font-size="6.4" font-family="Liberation Sans, sans-serif" fill="#595959">mg/l</text><clipPath id="cp"><rect x="0" y="147.2" width="916" height="389.2"/></clipPath><g clip-path="url(#cp)"><circle cx="190.7" cy="149.4" r="3" fill="#fff" stroke="#4a4a4a" stroke-width="1.1"/><circle cx="455" cy="149.4" r="3" fill="#fff" stroke="#4a4a4a" stroke-width="1.1"/><circle cx="719.3" cy="149.4" r="3" fill="#fff" stroke="#4a4a4a" stroke-width="1.1"/><circle cx="190.7" cy="341.5" r="3" fill="#fff" stroke="#4a4a4a" stroke-width="1.1"/><circle cx="719.3" cy="341.5" r="3" fill="#fff" stroke="#4a4a4a" stroke-width="1.1"/><circle cx="190.7" cy="533.7" r="3" fill="#fff" stroke="#4a4a4a" stroke-width="1.1"/><circle cx="455" cy="533.7" r="3" fill="#fff" stroke="#4a4a4a" stroke-width="1.1"/><circle cx="719.3" cy="533.7" r="3" fill="#fff" stroke="#4a4a4a" stroke-width="1.1"/></g></svg>
<svg class="abs" style="left:126.2px;top:61.9px" width="43.2" height="31" viewBox="0 0 43.6 31" preserveAspectRatio="none"><rect x="0.25" y="0.25" width="43.1" height="30.5" fill="#fff" stroke="#d2d2d2" stroke-width="0.5"/><line x1="3.2" y1="2.4" x2="3.2" y2="22.8" stroke="#d9d9d9" stroke-width="0.45"/><line x1="8.6" y1="2.4" x2="8.6" y2="22.8" stroke="#d9d9d9" stroke-width="0.45"/><line x1="14.0" y1="2.4" x2="14.0" y2="22.8" stroke="#d9d9d9" stroke-width="0.45"/><line x1="19.4" y1="2.4" x2="19.4" y2="22.8" stroke="#d9d9d9" stroke-width="0.45"/><line x1="24.8" y1="2.4" x2="24.8" y2="22.8" stroke="#d9d9d9" stroke-width="0.45"/><line x1="30.2" y1="2.4" x2="30.2" y2="22.8" stroke="#d9d9d9" stroke-width="0.45"/><line x1="35.6" y1="2.4" x2="35.6" y2="22.8" stroke="#d9d9d9" stroke-width="0.45"/><line x1="41.0" y1="2.4" x2="41.0" y2="22.8" stroke="#d9d9d9" stroke-width="0.45"/><line x1="3.2" y1="2.4" x2="41.0" y2="2.4" stroke="#d9d9d9" stroke-width="0.45"/><line x1="3.2" y1="5.8" x2="41.0" y2="5.8" stroke="#d9d9d9" stroke-width="0.45"/><line x1="3.2" y1="9.2" x2="41.0" y2="9.2" stroke="#d9d9d9" stroke-width="0.45"/><line x1="3.2" y1="12.6" x2="41.0" y2="12.6" stroke="#d9d9d9" stroke-width="0.45"/><line x1="3.2" y1="16.0" x2="41.0" y2="16.0" stroke="#d9d9d9" stroke-width="0.45"/><line x1="3.2" y1="19.4" x2="41.0" y2="19.4" stroke="#d9d9d9" stroke-width="0.45"/><line x1="3.2" y1="22.8" x2="41.0" y2="22.8" stroke="#d9d9d9" stroke-width="0.45"/><polyline points="9.7,6.2 10.3,8.1 10.9,8.2 11.4,8.6 12.0,9.1 12.5,9.4 13.1,9.8 13.7,11.7 14.2,12.0 14.8,12.9 15.3,12.5 15.9,14.2 16.5,15.3 17.0,16.2 17.6,15.1 18.2,13.8 18.7,14.4 19.3,14.4 19.8,14.1 20.4,14.3 21.0,14.4 21.5,15.0 22.1,15.1 22.7,15.1 23.2,13.4 23.8,10.0 24.3,10.6 24.9,12.5 25.5,12.6 26.0,13.3 26.6,14.7 27.0,15.2 27.6,16.2 28.1,17.4 28.7,12.7 29.3,13.5 29.8,12.8 30.4,13.0 30.9,13.4 31.5,13.6 32.0,13.9 32.4,15.0 33.0,15.1 33.6,16.1 34.1,13.5 34.7,12.1 35.3,13.2 35.8,13.4 36.4,15.3 36.9,14.7 37.5,14.3" fill="none" stroke="#4472c4" stroke-width="1" opacity="1"/><polyline points="9.7,6.5 10.3,7.3 10.9,8.3 11.4,7.9 12.0,8.3 12.5,8.1 13.1,9.2 13.7,10.3 14.2,10.7 14.8,10.9 15.3,11.1 15.9,12.2 16.5,12.4 17.0,13.7 17.6,14.1 18.2,13.1 18.7,13.5 19.3,14.1 19.8,13.6 20.4,14.3 21.0,10.4 21.5,11.1 22.1,11.6 22.7,12.2 23.2,9.3 23.8,8.2 24.3,9.3 24.9,11.1 25.5,10.9 26.0,11.6 26.6,12.9 27.0,13.6 27.6,14.5 28.1,15.4 28.7,11.2 29.3,12.4 29.8,21.5 30.4,21.7 30.9,18.2" fill="none" stroke="#ed7d31" stroke-width="1" opacity="1"/><polyline points="33.8,18.1 34.4,15.7 34.9,13.3 35.5,16.5 36.1,16.3 36.6,17.6 37.2,11.2 37.8,13.3" fill="none" stroke="#ed7d31" stroke-width="1" opacity="1"/><polyline points="9.7,8.1 10.3,9.0 10.9,7.4 11.4,6.3 12.0,9.7 12.6,11.7 13.1,16.7 13.7,13.5 14.2,13.8 14.8,13.6 15.4,13.9 15.9,14.5 16.5,13.8 17.1,13.0 17.6,14.1 18.2,15.0 18.7,15.7 19.3,15.9 19.9,15.7 20.4,16.1 21.0,13.5 21.6,11.9 22.1,8.8 22.7,13.6 23.2,12.9 23.8,12.0 24.4,13.0 24.9,14.8 25.5,15.0 26.0,15.6 26.6,16.1 27.0,10.6 27.6,12.2 28.1,19.1 28.7,15.1 29.3,15.4 29.8,15.4 30.4,15.0 30.9,15.2 31.5,16.1 32.0,9.3 32.4,11.2 33.0,14.9 33.6,15.9 34.1,15.0 34.7,14.4 35.3,15.6 35.8,15.3 36.4,16.9 36.9,16.1 37.5,10.1" fill="none" stroke="#a5a5a5" stroke-width="0.8" opacity="1"/><line x1="15.5" y1="1.3" x2="28.5" y2="1.3" stroke="#9a9a9a" stroke-width="0.6"/><line x1="0.6" y1="26.4" x2="3.2" y2="23.7" stroke="#b0b0b0" stroke-width="0.5"/><line x1="6.0" y1="26.4" x2="8.6" y2="23.7" stroke="#b0b0b0" stroke-width="0.5"/><line x1="11.4" y1="26.4" x2="14.0" y2="23.7" stroke="#b0b0b0" stroke-width="0.5"/><line x1="16.8" y1="26.4" x2="19.4" y2="23.7" stroke="#b0b0b0" stroke-width="0.5"/><line x1="22.2" y1="26.4" x2="24.8" y2="23.7" stroke="#b0b0b0" stroke-width="0.5"/><line x1="27.6" y1="26.4" x2="30.2" y2="23.7" stroke="#b0b0b0" stroke-width="0.5"/><line x1="33.0" y1="26.4" x2="35.6" y2="23.7" stroke="#b0b0b0" stroke-width="0.5"/><line x1="38.4" y1="26.4" x2="41.0" y2="23.7" stroke="#b0b0b0" stroke-width="0.5"/><line x1="16" y1="29.3" x2="18.6" y2="29.3" stroke="#4472c4" stroke-width="0.8"/><line x1="19.6" y1="29.3" x2="22.2" y2="29.3" stroke="#ed7d31" stroke-width="0.8"/><line x1="24.4" y1="29.3" x2="27" y2="29.3" stroke="#a5a5a5" stroke-width="0.8"/></svg><svg class="abs" style="left:183.2px;top:61.9px" width="43.2" height="31" viewBox="0 0 43.6 31" preserveAspectRatio="none"><rect x="0.25" y="0.25" width="43.1" height="30.5" fill="#fff" stroke="#d2d2d2" stroke-width="0.5"/><line x1="3.2" y1="2.4" x2="3.2" y2="22.8" stroke="#d9d9d9" stroke-width="0.45"/><line x1="8.6" y1="2.4" x2="8.6" y2="22.8" stroke="#d9d9d9" stroke-width="0.45"/><line x1="14.0" y1="2.4" x2="14.0" y2="22.8" stroke="#d9d9d9" stroke-width="0.45"/><line x1="19.4" y1="2.4" x2="19.4" y2="22.8" stroke="#d9d9d9" stroke-width="0.45"/><line x1="24.8" y1="2.4" x2="24.8" y2="22.8" stroke="#d9d9d9" stroke-width="0.45"/><line x1="30.2" y1="2.4" x2="30.2" y2="22.8" stroke="#d9d9d9" stroke-width="0.45"/><line x1="35.6" y1="2.4" x2="35.6" y2="22.8" stroke="#d9d9d9" stroke-width="0.45"/><line x1="41.0" y1="2.4" x2="41.0" y2="22.8" stroke="#d9d9d9" stroke-width="0.45"/><line x1="3.2" y1="2.4" x2="41.0" y2="2.4" stroke="#d9d9d9" stroke-width="0.45"/><line x1="3.2" y1="5.8" x2="41.0" y2="5.8" stroke="#d9d9d9" stroke-width="0.45"/><line x1="3.2" y1="9.2" x2="41.0" y2="9.2" stroke="#d9d9d9" stroke-width="0.45"/><line x1="3.2" y1="12.6" x2="41.0" y2="12.6" stroke="#d9d9d9" stroke-width="0.45"/><line x1="3.2" y1="16.0" x2="41.0" y2="16.0" stroke="#d9d9d9" stroke-width="0.45"/><line x1="3.2" y1="19.4" x2="41.0" y2="19.4" stroke="#d9d9d9" stroke-width="0.45"/><line x1="3.2" y1="22.8" x2="41.0" y2="22.8" stroke="#d9d9d9" stroke-width="0.45"/><polyline points="9.7,6.2 10.3,8.1 10.9,8.2 11.4,8.6 12.0,9.1 12.5,9.4 13.1,9.8 13.7,11.7 14.2,12.0 14.8,12.9 15.3,12.5 15.9,14.2 16.5,15.3 17.0,16.2 17.6,15.1 18.2,13.8 18.7,14.4 19.3,14.4 19.8,14.1 20.4,14.3 21.0,14.4 21.5,15.0 22.1,15.1 22.7,15.1 23.2,13.4 23.8,10.0 24.3,10.6 24.9,12.5 25.5,12.6 26.0,13.3 26.6,14.7 27.0,15.2 27.6,16.2 28.1,17.4 28.7,12.7 29.3,13.5 29.8,12.8 30.4,13.0 30.9,13.4 31.5,13.6 32.0,13.9 32.4,15.0 33.0,15.1 33.6,16.1 34.1,13.5 34.7,12.1 35.3,13.2 35.8,13.4 36.4,15.3 36.9,14.7 37.5,14.3" fill="none" stroke="#4472c4" stroke-width="1" opacity="1"/><polyline points="9.7,6.5 10.3,7.3 10.9,8.3 11.4,7.9 12.0,8.3 12.5,8.1 13.1,9.2 13.7,10.3 14.2,10.7 14.8,10.9 15.3,11.1 15.9,12.2 16.5,12.4 17.0,13.7 17.6,14.1 18.2,13.1 18.7,13.5 19.3,14.1 19.8,13.6 20.4,14.3 21.0,10.4 21.5,11.1 22.1,11.6 22.7,12.2 23.2,9.3 23.8,8.2 24.3,9.3 24.9,11.1 25.5,10.9 26.0,11.6 26.6,12.9 27.0,13.6 27.6,14.5 28.1,15.4 28.7,11.2 29.3,12.4 29.8,21.5 30.4,21.7 30.9,18.2" fill="none" stroke="#ed7d31" stroke-width="1" opacity="1"/><polyline points="33.8,18.1 34.4,15.7 34.9,13.3 35.5,16.5 36.1,16.3 36.6,17.6 37.2,11.2 37.8,13.3" fill="none" stroke="#ed7d31" stroke-width="1" opacity="1"/><polyline points="9.7,8.1 10.3,9.0 10.9,7.4 11.4,6.3 12.0,9.7 12.6,11.7 13.1,16.7 13.7,13.5 14.2,13.8 14.8,13.6 15.4,13.9 15.9,14.5 16.5,13.8 17.1,13.0 17.6,14.1 18.2,15.0 18.7,15.7 19.3,15.9 19.9,15.7 20.4,16.1 21.0,13.5 21.6,11.9 22.1,8.8 22.7,13.6 23.2,12.9 23.8,12.0 24.4,13.0 24.9,14.8 25.5,15.0 26.0,15.6 26.6,16.1 27.0,10.6 27.6,12.2 28.1,19.1 28.7,15.1 29.3,15.4 29.8,15.4 30.4,15.0 30.9,15.2 31.5,16.1 32.0,9.3 32.4,11.2 33.0,14.9 33.6,15.9 34.1,15.0 34.7,14.4 35.3,15.6 35.8,15.3 36.4,16.9 36.9,16.1 37.5,10.1" fill="none" stroke="#a5a5a5" stroke-width="0.8" opacity="1"/><line x1="15.5" y1="1.3" x2="28.5" y2="1.3" stroke="#9a9a9a" stroke-width="0.6"/><line x1="0.6" y1="26.4" x2="3.2" y2="23.7" stroke="#b0b0b0" stroke-width="0.5"/><line x1="6.0" y1="26.4" x2="8.6" y2="23.7" stroke="#b0b0b0" stroke-width="0.5"/><line x1="11.4" y1="26.4" x2="14.0" y2="23.7" stroke="#b0b0b0" stroke-width="0.5"/><line x1="16.8" y1="26.4" x2="19.4" y2="23.7" stroke="#b0b0b0" stroke-width="0.5"/><line x1="22.2" y1="26.4" x2="24.8" y2="23.7" stroke="#b0b0b0" stroke-width="0.5"/><line x1="27.6" y1="26.4" x2="30.2" y2="23.7" stroke="#b0b0b0" stroke-width="0.5"/><line x1="33.0" y1="26.4" x2="35.6" y2="23.7" stroke="#b0b0b0" stroke-width="0.5"/><line x1="38.4" y1="26.4" x2="41.0" y2="23.7" stroke="#b0b0b0" stroke-width="0.5"/><line x1="16" y1="29.3" x2="18.6" y2="29.3" stroke="#4472c4" stroke-width="0.8"/><line x1="19.6" y1="29.3" x2="22.2" y2="29.3" stroke="#ed7d31" stroke-width="0.8"/><line x1="24.4" y1="29.3" x2="27" y2="29.3" stroke="#a5a5a5" stroke-width="0.8"/></svg><svg class="abs" style="left:240.2px;top:61.9px" width="43.2" height="31" viewBox="0 0 43.6 31" preserveAspectRatio="none"><rect x="0.25" y="0.25" width="43.1" height="30.5" fill="#fff" stroke="#d2d2d2" stroke-width="0.5"/><line x1="3.2" y1="2.4" x2="3.2" y2="22.8" stroke="#d9d9d9" stroke-width="0.45"/><line x1="8.6" y1="2.4" x2="8.6" y2="22.8" stroke="#d9d9d9" stroke-width="0.45"/><line x1="14.0" y1="2.4" x2="14.0" y2="22.8" stroke="#d9d9d9" stroke-width="0.45"/><line x1="19.4" y1="2.4" x2="19.4" y2="22.8" stroke="#d9d9d9" stroke-width="0.45"/><line x1="24.8" y1="2.4" x2="24.8" y2="22.8" stroke="#d9d9d9" stroke-width="0.45"/><line x1="30.2" y1="2.4" x2="30.2" y2="22.8" stroke="#d9d9d9" stroke-width="0.45"/><line x1="35.6" y1="2.4" x2="35.6" y2="22.8" stroke="#d9d9d9" stroke-width="0.45"/><line x1="41.0" y1="2.4" x2="41.0" y2="22.8" stroke="#d9d9d9" stroke-width="0.45"/><line x1="3.2" y1="2.4" x2="41.0" y2="2.4" stroke="#d9d9d9" stroke-width="0.45"/><line x1="3.2" y1="5.8" x2="41.0" y2="5.8" stroke="#d9d9d9" stroke-width="0.45"/><line x1="3.2" y1="9.2" x2="41.0" y2="9.2" stroke="#d9d9d9" stroke-width="0.45"/><line x1="3.2" y1="12.6" x2="41.0" y2="12.6" stroke="#d9d9d9" stroke-width="0.45"/><line x1="3.2" y1="16.0" x2="41.0" y2="16.0" stroke="#d9d9d9" stroke-width="0.45"/><line x1="3.2" y1="19.4" x2="41.0" y2="19.4" stroke="#d9d9d9" stroke-width="0.45"/><line x1="3.2" y1="22.8" x2="41.0" y2="22.8" stroke="#d9d9d9" stroke-width="0.45"/><polyline points="9.7,6.2 10.3,8.1 10.9,8.2 11.4,8.6 12.0,9.1 12.5,9.4 13.1,9.8 13.7,11.7 14.2,12.0 14.8,12.9 15.3,12.5 15.9,14.2 16.5,15.3 17.0,16.2 17.6,15.1 18.2,13.8 18.7,14.4 19.3,14.4 19.8,14.1 20.4,14.3 21.0,14.4 21.5,15.0 22.1,15.1 22.7,15.1 23.2,13.4 23.8,10.0 24.3,10.6 24.9,12.5 25.5,12.6 26.0,13.3 26.6,14.7 27.0,15.2 27.6,16.2 28.1,17.4 28.7,12.7 29.3,13.5 29.8,12.8 30.4,13.0 30.9,13.4 31.5,13.6 32.0,13.9 32.4,15.0 33.0,15.1 33.6,16.1 34.1,13.5 34.7,12.1 35.3,13.2 35.8,13.4 36.4,15.3 36.9,14.7 37.5,14.3" fill="none" stroke="#4472c4" stroke-width="1" opacity="1"/><polyline points="9.7,6.5 10.3,7.3 10.9,8.3 11.4,7.9 12.0,8.3 12.5,8.1 13.1,9.2 13.7,10.3 14.2,10.7 14.8,10.9 15.3,11.1 15.9,12.2 16.5,12.4 17.0,13.7 17.6,14.1 18.2,13.1 18.7,13.5 19.3,14.1 19.8,13.6 20.4,14.3 21.0,10.4 21.5,11.1 22.1,11.6 22.7,12.2 23.2,9.3 23.8,8.2 24.3,9.3 24.9,11.1 25.5,10.9 26.0,11.6 26.6,12.9 27.0,13.6 27.6,14.5 28.1,15.4 28.7,11.2 29.3,12.4 29.8,21.5 30.4,21.7 30.9,18.2" fill="none" stroke="#ed7d31" stroke-width="1" opacity="1"/><polyline points="33.8,18.1 34.4,15.7 34.9,13.3 35.5,16.5 36.1,16.3 36.6,17.6 37.2,11.2 37.8,13.3" fill="none" stroke="#ed7d31" stroke-width="1" opacity="1"/><polyline points="9.7,8.1 10.3,9.0 10.9,7.4 11.4,6.3 12.0,9.7 12.6,11.7 13.1,16.7 13.7,13.5 14.2,13.8 14.8,13.6 15.4,13.9 15.9,14.5 16.5,13.8 17.1,13.0 17.6,14.1 18.2,15.0 18.7,15.7 19.3,15.9 19.9,15.7 20.4,16.1 21.0,13.5 21.6,11.9 22.1,8.8 22.7,13.6 23.2,12.9 23.8,12.0 24.4,13.0 24.9,14.8 25.5,15.0 26.0,15.6 26.6,16.1 27.0,10.6 27.6,12.2 28.1,19.1 28.7,15.1 29.3,15.4 29.8,15.4 30.4,15.0 30.9,15.2 31.5,16.1 32.0,9.3 32.4,11.2 33.0,14.9 33.6,15.9 34.1,15.0 34.7,14.4 35.3,15.6 35.8,15.3 36.4,16.9 36.9,16.1 37.5,10.1" fill="none" stroke="#a5a5a5" stroke-width="0.8" opacity="1"/><line x1="15.5" y1="1.3" x2="28.5" y2="1.3" stroke="#9a9a9a" stroke-width="0.6"/><line x1="0.6" y1="26.4" x2="3.2" y2="23.7" stroke="#b0b0b0" stroke-width="0.5"/><line x1="6.0" y1="26.4" x2="8.6" y2="23.7" stroke="#b0b0b0" stroke-width="0.5"/><line x1="11.4" y1="26.4" x2="14.0" y2="23.7" stroke="#b0b0b0" stroke-width="0.5"/><line x1="16.8" y1="26.4" x2="19.4" y2="23.7" stroke="#b0b0b0" stroke-width="0.5"/><line x1="22.2" y1="26.4" x2="24.8" y2="23.7" stroke="#b0b0b0" stroke-width="0.5"/><line x1="27.6" y1="26.4" x2="30.2" y2="23.7" stroke="#b0b0b0" stroke-width="0.5"/><line x1="33.0" y1="26.4" x2="35.6" y2="23.7" stroke="#b0b0b0" stroke-width="0.5"/><line x1="38.4" y1="26.4" x2="41.0" y2="23.7" stroke="#b0b0b0" stroke-width="0.5"/><line x1="16" y1="29.3" x2="18.6" y2="29.3" stroke="#4472c4" stroke-width="0.8"/><line x1="19.6" y1="29.3" x2="22.2" y2="29.3" stroke="#ed7d31" stroke-width="0.8"/><line x1="24.4" y1="29.3" x2="27" y2="29.3" stroke="#a5a5a5" stroke-width="0.8"/></svg><svg class="abs" style="left:297.2px;top:61.9px" width="43.2" height="31" viewBox="0 0 43.6 31" preserveAspectRatio="none"><rect x="0.25" y="0.25" width="43.1" height="30.5" fill="#fff" stroke="#d2d2d2" stroke-width="0.5"/><line x1="3.2" y1="2.4" x2="3.2" y2="22.8" stroke="#d9d9d9" stroke-width="0.45"/><line x1="8.6" y1="2.4" x2="8.6" y2="22.8" stroke="#d9d9d9" stroke-width="0.45"/><line x1="14.0" y1="2.4" x2="14.0" y2="22.8" stroke="#d9d9d9" stroke-width="0.45"/><line x1="19.4" y1="2.4" x2="19.4" y2="22.8" stroke="#d9d9d9" stroke-width="0.45"/><line x1="24.8" y1="2.4" x2="24.8" y2="22.8" stroke="#d9d9d9" stroke-width="0.45"/><line x1="30.2" y1="2.4" x2="30.2" y2="22.8" stroke="#d9d9d9" stroke-width="0.45"/><line x1="35.6" y1="2.4" x2="35.6" y2="22.8" stroke="#d9d9d9" stroke-width="0.45"/><line x1="41.0" y1="2.4" x2="41.0" y2="22.8" stroke="#d9d9d9" stroke-width="0.45"/><line x1="3.2" y1="2.4" x2="41.0" y2="2.4" stroke="#d9d9d9" stroke-width="0.45"/><line x1="3.2" y1="5.8" x2="41.0" y2="5.8" stroke="#d9d9d9" stroke-width="0.45"/><line x1="3.2" y1="9.2" x2="41.0" y2="9.2" stroke="#d9d9d9" stroke-width="0.45"/><line x1="3.2" y1="12.6" x2="41.0" y2="12.6" stroke="#d9d9d9" stroke-width="0.45"/><line x1="3.2" y1="16.0" x2="41.0" y2="16.0" stroke="#d9d9d9" stroke-width="0.45"/><line x1="3.2" y1="19.4" x2="41.0" y2="19.4" stroke="#d9d9d9" stroke-width="0.45"/><line x1="3.2" y1="22.8" x2="41.0" y2="22.8" stroke="#d9d9d9" stroke-width="0.45"/><polyline points="9.7,6.2 10.3,8.1 10.9,8.2 11.4,8.6 12.0,9.1 12.5,9.4 13.1,9.8 13.7,11.7 14.2,12.0 14.8,12.9 15.3,12.5 15.9,14.2 16.5,15.3 17.0,16.2 17.6,15.1 18.2,13.8 18.7,14.4 19.3,14.4 19.8,14.1 20.4,14.3 21.0,14.4 21.5,15.0 22.1,15.1 22.7,15.1 23.2,13.4 23.8,10.0 24.3,10.6 24.9,12.5 25.5,12.6 26.0,13.3 26.6,14.7 27.0,15.2 27.6,16.2 28.1,17.4 28.7,12.7 29.3,13.5 29.8,12.8 30.4,13.0 30.9,13.4 31.5,13.6 32.0,13.9 32.4,15.0 33.0,15.1 33.6,16.1 34.1,13.5 34.7,12.1 35.3,13.2 35.8,13.4 36.4,15.3 36.9,14.7 37.5,14.3" fill="none" stroke="#4472c4" stroke-width="1" opacity="0.5"/><polyline points="9.7,6.5 10.3,7.3 10.9,8.3 11.4,7.9 12.0,8.3 12.5,8.1 13.1,9.2 13.7,10.3 14.2,10.7 14.8,10.9 15.3,11.1 15.9,12.2 16.5,12.4 17.0,13.7 17.6,14.1 18.2,13.1 18.7,13.5 19.3,14.1 19.8,13.6 20.4,14.3 21.0,10.4 21.5,11.1 22.1,11.6 22.7,12.2 23.2,9.3 23.8,8.2 24.3,9.3 24.9,11.1 25.5,10.9 26.0,11.6 26.6,12.9 27.0,13.6 27.6,14.5 28.1,15.4 28.7,11.2 29.3,12.4 29.8,21.5 30.4,21.7 30.9,18.2" fill="none" stroke="#ed7d31" stroke-width="1" opacity="0.5"/><polyline points="33.8,18.1 34.4,15.7 34.9,13.3 35.5,16.5 36.1,16.3 36.6,17.6 37.2,11.2 37.8,13.3" fill="none" stroke="#ed7d31" stroke-width="1" opacity="0.5"/><polyline points="9.7,8.1 10.3,9.0 10.9,7.4 11.4,6.3 12.0,9.7 12.6,11.7 13.1,16.7 13.7,13.5 14.2,13.8 14.8,13.6 15.4,13.9 15.9,14.5 16.5,13.8 17.1,13.0 17.6,14.1 18.2,15.0 18.7,15.7 19.3,15.9 19.9,15.7 20.4,16.1 21.0,13.5 21.6,11.9 22.1,8.8 22.7,13.6 23.2,12.9 23.8,12.0 24.4,13.0 24.9,14.8 25.5,15.0 26.0,15.6 26.6,16.1 27.0,10.6 27.6,12.2 28.1,19.1 28.7,15.1 29.3,15.4 29.8,15.4 30.4,15.0 30.9,15.2 31.5,16.1 32.0,9.3 32.4,11.2 33.0,14.9 33.6,15.9 34.1,15.0 34.7,14.4 35.3,15.6 35.8,15.3 36.4,16.9 36.9,16.1 37.5,10.1" fill="none" stroke="#a5a5a5" stroke-width="0.8" opacity="0.5"/><line x1="15.5" y1="1.3" x2="28.5" y2="1.3" stroke="#9a9a9a" stroke-width="0.6"/><line x1="0.6" y1="26.4" x2="3.2" y2="23.7" stroke="#b0b0b0" stroke-width="0.5"/><line x1="6.0" y1="26.4" x2="8.6" y2="23.7" stroke="#b0b0b0" stroke-width="0.5"/><line x1="11.4" y1="26.4" x2="14.0" y2="23.7" stroke="#b0b0b0" stroke-width="0.5"/><line x1="16.8" y1="26.4" x2="19.4" y2="23.7" stroke="#b0b0b0" stroke-width="0.5"/><line x1="22.2" y1="26.4" x2="24.8" y2="23.7" stroke="#b0b0b0" stroke-width="0.5"/><line x1="27.6" y1="26.4" x2="30.2" y2="23.7" stroke="#b0b0b0" stroke-width="0.5"/><line x1="33.0" y1="26.4" x2="35.6" y2="23.7" stroke="#b0b0b0" stroke-width="0.5"/><line x1="38.4" y1="26.4" x2="41.0" y2="23.7" stroke="#b0b0b0" stroke-width="0.5"/><line x1="16" y1="29.3" x2="18.6" y2="29.3" stroke="#4472c4" stroke-width="0.8"/><line x1="19.6" y1="29.3" x2="22.2" y2="29.3" stroke="#ed7d31" stroke-width="0.8"/><line x1="24.4" y1="29.3" x2="27" y2="29.3" stroke="#a5a5a5" stroke-width="0.8"/></svg><svg class="abs" style="left:354.2px;top:61.9px" width="43.2" height="31" viewBox="0 0 43.6 31" preserveAspectRatio="none"><rect x="0.25" y="0.25" width="43.1" height="30.5" fill="#fff" stroke="#d2d2d2" stroke-width="0.5"/><line x1="3.2" y1="2.4" x2="3.2" y2="22.8" stroke="#d9d9d9" stroke-width="0.45"/><line x1="8.6" y1="2.4" x2="8.6" y2="22.8" stroke="#d9d9d9" stroke-width="0.45"/><line x1="14.0" y1="2.4" x2="14.0" y2="22.8" stroke="#d9d9d9" stroke-width="0.45"/><line x1="19.4" y1="2.4" x2="19.4" y2="22.8" stroke="#d9d9d9" stroke-width="0.45"/><line x1="24.8" y1="2.4" x2="24.8" y2="22.8" stroke="#d9d9d9" stroke-width="0.45"/><line x1="30.2" y1="2.4" x2="30.2" y2="22.8" stroke="#d9d9d9" stroke-width="0.45"/><line x1="35.6" y1="2.4" x2="35.6" y2="22.8" stroke="#d9d9d9" stroke-width="0.45"/><line x1="41.0" y1="2.4" x2="41.0" y2="22.8" stroke="#d9d9d9" stroke-width="0.45"/><line x1="3.2" y1="2.4" x2="41.0" y2="2.4" stroke="#d9d9d9" stroke-width="0.45"/><line x1="3.2" y1="5.8" x2="41.0" y2="5.8" stroke="#d9d9d9" stroke-width="0.45"/><line x1="3.2" y1="9.2" x2="41.0" y2="9.2" stroke="#d9d9d9" stroke-width="0.45"/><line x1="3.2" y1="12.6" x2="41.0" y2="12.6" stroke="#d9d9d9" stroke-width="0.45"/><line x1="3.2" y1="16.0" x2="41.0" y2="16.0" stroke="#d9d9d9" stroke-width="0.45"/><line x1="3.2" y1="19.4" x2="41.0" y2="19.4" stroke="#d9d9d9" stroke-width="0.45"/><line x1="3.2" y1="22.8" x2="41.0" y2="22.8" stroke="#d9d9d9" stroke-width="0.45"/><polyline points="9.7,6.2 10.3,8.1 10.9,8.2 11.4,8.6 12.0,9.1 12.5,9.4 13.1,9.8 13.7,11.7 14.2,12.0 14.8,12.9 15.3,12.5 15.9,14.2 16.5,15.3 17.0,16.2 17.6,15.1 18.2,13.8 18.7,14.4 19.3,14.4 19.8,14.1 20.4,14.3 21.0,14.4 21.5,15.0 22.1,15.1 22.7,15.1 23.2,13.4 23.8,10.0 24.3,10.6 24.9,12.5 25.5,12.6 26.0,13.3 26.6,14.7 27.0,15.2 27.6,16.2 28.1,17.4 28.7,12.7 29.3,13.5 29.8,12.8 30.4,13.0 30.9,13.4 31.5,13.6 32.0,13.9 32.4,15.0 33.0,15.1 33.6,16.1 34.1,13.5 34.7,12.1 35.3,13.2 35.8,13.4 36.4,15.3 36.9,14.7 37.5,14.3" fill="none" stroke="#4472c4" stroke-width="1" opacity="1"/><polyline points="9.7,6.5 10.3,7.3 10.9,8.3 11.4,7.9 12.0,8.3 12.5,8.1 13.1,9.2 13.7,10.3 14.2,10.7 14.8,10.9 15.3,11.1 15.9,12.2 16.5,12.4 17.0,13.7 17.6,14.1 18.2,13.1 18.7,13.5 19.3,14.1 19.8,13.6 20.4,14.3 21.0,10.4 21.5,11.1 22.1,11.6 22.7,12.2 23.2,9.3 23.8,8.2 24.3,9.3 24.9,11.1 25.5,10.9 26.0,11.6 26.6,12.9 27.0,13.6 27.6,14.5 28.1,15.4 28.7,11.2 29.3,12.4 29.8,21.5 30.4,21.7 30.9,18.2" fill="none" stroke="#ed7d31" stroke-width="1" opacity="1"/><polyline points="33.8,18.1 34.4,15.7 34.9,13.3 35.5,16.5 36.1,16.3 36.6,17.6 37.2,11.2 37.8,13.3" fill="none" stroke="#ed7d31" stroke-width="1" opacity="1"/><polyline points="9.7,8.1 10.3,9.0 10.9,7.4 11.4,6.3 12.0,9.7 12.6,11.7 13.1,16.7 13.7,13.5 14.2,13.8 14.8,13.6 15.4,13.9 15.9,14.5 16.5,13.8 17.1,13.0 17.6,14.1 18.2,15.0 18.7,15.7 19.3,15.9 19.9,15.7 20.4,16.1 21.0,13.5 21.6,11.9 22.1,8.8 22.7,13.6 23.2,12.9 23.8,12.0 24.4,13.0 24.9,14.8 25.5,15.0 26.0,15.6 26.6,16.1 27.0,10.6 27.6,12.2 28.1,19.1 28.7,15.1 29.3,15.4 29.8,15.4 30.4,15.0 30.9,15.2 31.5,16.1 32.0,9.3 32.4,11.2 33.0,14.9 33.6,15.9 34.1,15.0 34.7,14.4 35.3,15.6 35.8,15.3 36.4,16.9 36.9,16.1 37.5,10.1" fill="none" stroke="#a5a5a5" stroke-width="0.8" opacity="1"/><line x1="15.5" y1="1.3" x2="28.5" y2="1.3" stroke="#9a9a9a" stroke-width="0.6"/><line x1="0.6" y1="26.4" x2="3.2" y2="23.7" stroke="#b0b0b0" stroke-width="0.5"/><line x1="6.0" y1="26.4" x2="8.6" y2="23.7" stroke="#b0b0b0" stroke-width="0.5"/><line x1="11.4" y1="26.4" x2="14.0" y2="23.7" stroke="#b0b0b0" stroke-width="0.5"/><line x1="16.8" y1="26.4" x2="19.4" y2="23.7" stroke="#b0b0b0" stroke-width="0.5"/><line x1="22.2" y1="26.4" x2="24.8" y2="23.7" stroke="#b0b0b0" stroke-width="0.5"/><line x1="27.6" y1="26.4" x2="30.2" y2="23.7" stroke="#b0b0b0" stroke-width="0.5"/><line x1="33.0" y1="26.4" x2="35.6" y2="23.7" stroke="#b0b0b0" stroke-width="0.5"/><line x1="38.4" y1="26.4" x2="41.0" y2="23.7" stroke="#b0b0b0" stroke-width="0.5"/><line x1="16" y1="29.3" x2="18.6" y2="29.3" stroke="#4472c4" stroke-width="0.8"/><line x1="19.6" y1="29.3" x2="22.2" y2="29.3" stroke="#ed7d31" stroke-width="0.8"/><line x1="24.4" y1="29.3" x2="27" y2="29.3" stroke="#a5a5a5" stroke-width="0.8"/></svg><svg class="abs" style="left:411.2px;top:61.9px" width="43.2" height="31" viewBox="0 0 43.6 31" preserveAspectRatio="none"><rect x="0.25" y="0.25" width="43.1" height="30.5" fill="#3a3a3a" stroke="#2c2c2c" stroke-width="0.5"/><line x1="3.2" y1="2.4" x2="3.2" y2="22.8" stroke="#5e5e5e" stroke-width="0.45"/><line x1="8.6" y1="2.4" x2="8.6" y2="22.8" stroke="#5e5e5e" stroke-width="0.45"/><line x1="14.0" y1="2.4" x2="14.0" y2="22.8" stroke="#5e5e5e" stroke-width="0.45"/><line x1="19.4" y1="2.4" x2="19.4" y2="22.8" stroke="#5e5e5e" stroke-width="0.45"/><line x1="24.8" y1="2.4" x2="24.8" y2="22.8" stroke="#5e5e5e" stroke-width="0.45"/><line x1="30.2" y1="2.4" x2="30.2" y2="22.8" stroke="#5e5e5e" stroke-width="0.45"/><line x1="35.6" y1="2.4" x2="35.6" y2="22.8" stroke="#5e5e5e" stroke-width="0.45"/><line x1="41.0" y1="2.4" x2="41.0" y2="22.8" stroke="#5e5e5e" stroke-width="0.45"/><line x1="3.2" y1="2.4" x2="41.0" y2="2.4" stroke="#5e5e5e" stroke-width="0.45"/><line x1="3.2" y1="5.8" x2="41.0" y2="5.8" stroke="#5e5e5e" stroke-width="0.45"/><line x1="3.2" y1="9.2" x2="41.0" y2="9.2" stroke="#5e5e5e" stroke-width="0.45"/><line x1="3.2" y1="12.6" x2="41.0" y2="12.6" stroke="#5e5e5e" stroke-width="0.45"/><line x1="3.2" y1="16.0" x2="41.0" y2="16.0" stroke="#5e5e5e" stroke-width="0.45"/><line x1="3.2" y1="19.4" x2="41.0" y2="19.4" stroke="#5e5e5e" stroke-width="0.45"/><line x1="3.2" y1="22.8" x2="41.0" y2="22.8" stroke="#5e5e5e" stroke-width="0.45"/><polyline points="9.7,6.2 10.3,8.1 10.9,8.2 11.4,8.6 12.0,9.1 12.5,9.4 13.1,9.8 13.7,11.7 14.2,12.0 14.8,12.9 15.3,12.5 15.9,14.2 16.5,15.3 17.0,16.2 17.6,15.1 18.2,13.8 18.7,14.4 19.3,14.4 19.8,14.1 20.4,14.3 21.0,14.4 21.5,15.0 22.1,15.1 22.7,15.1 23.2,13.4 23.8,10.0 24.3,10.6 24.9,12.5 25.5,12.6 26.0,13.3 26.6,14.7 27.0,15.2 27.6,16.2 28.1,17.4 28.7,12.7 29.3,13.5 29.8,12.8 30.4,13.0 30.9,13.4 31.5,13.6 32.0,13.9 32.4,15.0 33.0,15.1 33.6,16.1 34.1,13.5 34.7,12.1 35.3,13.2 35.8,13.4 36.4,15.3 36.9,14.7 37.5,14.3" fill="none" stroke="#4472c4" stroke-width="1" opacity="1"/><polyline points="9.7,6.5 10.3,7.3 10.9,8.3 11.4,7.9 12.0,8.3 12.5,8.1 13.1,9.2 13.7,10.3 14.2,10.7 14.8,10.9 15.3,11.1 15.9,12.2 16.5,12.4 17.0,13.7 17.6,14.1 18.2,13.1 18.7,13.5 19.3,14.1 19.8,13.6 20.4,14.3 21.0,10.4 21.5,11.1 22.1,11.6 22.7,12.2 23.2,9.3 23.8,8.2 24.3,9.3 24.9,11.1 25.5,10.9 26.0,11.6 26.6,12.9 27.0,13.6 27.6,14.5 28.1,15.4 28.7,11.2 29.3,12.4 29.8,21.5 30.4,21.7 30.9,18.2" fill="none" stroke="#ed7d31" stroke-width="1" opacity="1"/><polyline points="33.8,18.1 34.4,15.7 34.9,13.3 35.5,16.5 36.1,16.3 36.6,17.6 37.2,11.2 37.8,13.3" fill="none" stroke="#ed7d31" stroke-width="1" opacity="1"/><polyline points="9.7,8.1 10.3,9.0 10.9,7.4 11.4,6.3 12.0,9.7 12.6,11.7 13.1,16.7 13.7,13.5 14.2,13.8 14.8,13.6 15.4,13.9 15.9,14.5 16.5,13.8 17.1,13.0 17.6,14.1 18.2,15.0 18.7,15.7 19.3,15.9 19.9,15.7 20.4,16.1 21.0,13.5 21.6,11.9 22.1,8.8 22.7,13.6 23.2,12.9 23.8,12.0 24.4,13.0 24.9,14.8 25.5,15.0 26.0,15.6 26.6,16.1 27.0,10.6 27.6,12.2 28.1,19.1 28.7,15.1 29.3,15.4 29.8,15.4 30.4,15.0 30.9,15.2 31.5,16.1 32.0,9.3 32.4,11.2 33.0,14.9 33.6,15.9 34.1,15.0 34.7,14.4 35.3,15.6 35.8,15.3 36.4,16.9 36.9,16.1 37.5,10.1" fill="none" stroke="#cfcfcf" stroke-width="0.8" opacity="1"/><line x1="15.5" y1="1.3" x2="28.5" y2="1.3" stroke="#cfcfcf" stroke-width="0.6"/><line x1="0.6" y1="26.4" x2="3.2" y2="23.7" stroke="#9a9a9a" stroke-width="0.5"/><line x1="6.0" y1="26.4" x2="8.6" y2="23.7" stroke="#9a9a9a" stroke-width="0.5"/><line x1="11.4" y1="26.4" x2="14.0" y2="23.7" stroke="#9a9a9a" stroke-width="0.5"/><line x1="16.8" y1="26.4" x2="19.4" y2="23.7" stroke="#9a9a9a" stroke-width="0.5"/><line x1="22.2" y1="26.4" x2="24.8" y2="23.7" stroke="#9a9a9a" stroke-width="0.5"/><line x1="27.6" y1="26.4" x2="30.2" y2="23.7" stroke="#9a9a9a" stroke-width="0.5"/><line x1="33.0" y1="26.4" x2="35.6" y2="23.7" stroke="#9a9a9a" stroke-width="0.5"/><line x1="38.4" y1="26.4" x2="41.0" y2="23.7" stroke="#9a9a9a" stroke-width="0.5"/><line x1="16" y1="29.3" x2="18.6" y2="29.3" stroke="#4472c4" stroke-width="0.8"/><line x1="19.6" y1="29.3" x2="22.2" y2="29.3" stroke="#ed7d31" stroke-width="0.8"/><line x1="24.4" y1="29.3" x2="27" y2="29.3" stroke="#cfcfcf" stroke-width="0.8"/></svg><svg class="abs" style="left:468.2px;top:61.9px" width="43.2" height="31" viewBox="0 0 43.6 31" preserveAspectRatio="none"><rect x="0.25" y="0.25" width="43.1" height="30.5" fill="#fff" stroke="#d2d2d2" stroke-width="0.5"/><line x1="3.2" y1="4.4" x2="3.2" y2="25.6" stroke="#d9d9d9" stroke-width="0.45"/><line x1="8.6" y1="4.4" x2="8.6" y2="25.6" stroke="#d9d9d9" stroke-width="0.45"/><line x1="14.0" y1="4.4" x2="14.0" y2="25.6" stroke="#d9d9d9" stroke-width="0.45"/><line x1="19.4" y1="4.4" x2="19.4" y2="25.6" stroke="#d9d9d9" stroke-width="0.45"/><line x1="24.8" y1="4.4" x2="24.8" y2="25.6" stroke="#d9d9d9" stroke-width="0.45"/><line x1="30.2" y1="4.4" x2="30.2" y2="25.6" stroke="#d9d9d9" stroke-width="0.45"/><line x1="35.6" y1="4.4" x2="35.6" y2="25.6" stroke="#d9d9d9" stroke-width="0.45"/><line x1="41.0" y1="4.4" x2="41.0" y2="25.6" stroke="#d9d9d9" stroke-width="0.45"/><line x1="3.2" y1="4.4" x2="41.0" y2="4.4" stroke="#d9d9d9" stroke-width="0.45"/><line x1="3.2" y1="7.9" x2="41.0" y2="7.9" stroke="#d9d9d9" stroke-width="0.45"/><line x1="3.2" y1="11.5" x2="41.0" y2="11.5" stroke="#d9d9d9" stroke-width="0.45"/><line x1="3.2" y1="15.0" x2="41.0" y2="15.0" stroke="#d9d9d9" stroke-width="0.45"/><line x1="3.2" y1="18.5" x2="41.0" y2="18.5" stroke="#d9d9d9" stroke-width="0.45"/><line x1="3.2" y1="22.1" x2="41.0" y2="22.1" stroke="#d9d9d9" stroke-width="0.45"/><line x1="3.2" y1="25.6" x2="41.0" y2="25.6" stroke="#d9d9d9" stroke-width="0.45"/><polyline points="9.7,8.3 10.3,10.4 10.9,10.5 11.4,10.9 12.0,11.4 12.5,11.7 13.1,12.1 13.7,14.1 14.2,14.4 14.8,15.3 15.3,14.9 15.9,16.7 16.5,17.8 17.0,18.7 17.6,17.6 18.2,16.3 18.7,16.9 19.3,16.9 19.8,16.6 20.4,16.7 21.0,16.9 21.5,17.5 22.1,17.6 22.7,17.6 23.2,15.8 23.8,12.3 24.3,12.9 24.9,14.9 25.5,15.0 26.0,15.7 26.6,17.2 27.0,17.7 27.6,18.7 28.1,20.0 28.7,15.1 29.3,15.9 29.8,15.2 30.4,15.5 30.9,15.8 31.5,16.1 32.0,16.3 32.4,17.5 33.0,17.6 33.6,18.7 34.1,15.9 34.7,14.5 35.3,15.6 35.8,15.8 36.4,17.8 36.9,17.1 37.5,16.8" fill="none" stroke="#4472c4" stroke-width="1" opacity="1"/><polyline points="9.7,8.6 10.3,9.5 10.9,10.6 11.4,10.1 12.0,10.5 12.5,10.3 13.1,11.4 13.7,12.7 14.2,13.0 14.8,13.2 15.3,13.4 15.9,14.5 16.5,14.8 17.0,16.1 17.6,16.5 18.2,15.5 18.7,16.0 19.3,16.5 19.8,16.0 20.4,16.7 21.0,12.7 21.5,13.4 22.1,13.9 22.7,14.5 23.2,11.6 23.8,10.5 24.3,11.6 24.9,13.5 25.5,13.2 26.0,13.9 26.6,15.3 27.0,16.0 27.6,17.0 28.1,17.9 28.7,13.5 29.3,14.8 29.8,24.3 30.4,24.5 30.9,20.8" fill="none" stroke="#ed7d31" stroke-width="1" opacity="1"/><polyline points="33.8,20.7 34.4,18.2 34.9,15.7 35.5,19.0 36.1,18.8 36.6,20.2 37.2,13.6 37.8,15.8" fill="none" stroke="#ed7d31" stroke-width="1" opacity="1"/><polyline points="9.7,10.4 10.3,11.2 10.9,9.6 11.4,8.4 12.0,12.0 12.6,14.1 13.1,19.2 13.7,15.9 14.2,16.2 14.8,16.1 15.4,16.3 15.9,17.0 16.5,16.2 17.1,15.4 17.6,16.6 18.2,17.4 18.7,18.2 19.3,18.4 19.9,18.2 20.4,18.6 21.0,16.0 21.6,14.3 22.1,11.0 22.7,16.0 23.2,15.4 23.8,14.4 24.4,15.4 24.9,17.3 25.5,17.5 26.0,18.1 26.6,18.7 27.0,12.9 27.6,14.5 28.1,21.8 28.7,17.6 29.3,18.0 29.8,17.9 30.4,17.5 30.9,17.7 31.5,18.7 32.0,11.6 32.4,13.5 33.0,17.3 33.6,18.5 34.1,17.5 34.7,16.9 35.3,18.1 35.8,17.8 36.4,19.4 36.9,18.7 37.5,12.4" fill="none" stroke="#a5a5a5" stroke-width="0.8" opacity="1"/><line x1="15.5" y1="1.3" x2="28.5" y2="1.3" stroke="#9a9a9a" stroke-width="0.6"/><line x1="0.6" y1="29.2" x2="3.2" y2="26.5" stroke="#b0b0b0" stroke-width="0.5"/><line x1="6.0" y1="29.2" x2="8.6" y2="26.5" stroke="#b0b0b0" stroke-width="0.5"/><line x1="11.4" y1="29.2" x2="14.0" y2="26.5" stroke="#b0b0b0" stroke-width="0.5"/><line x1="16.8" y1="29.2" x2="19.4" y2="26.5" stroke="#b0b0b0" stroke-width="0.5"/><line x1="22.2" y1="29.2" x2="24.8" y2="26.5" stroke="#b0b0b0" stroke-width="0.5"/><line x1="27.6" y1="29.2" x2="30.2" y2="26.5" stroke="#b0b0b0" stroke-width="0.5"/><line x1="33.0" y1="29.2" x2="35.6" y2="26.5" stroke="#b0b0b0" stroke-width="0.5"/><line x1="38.4" y1="29.2" x2="41.0" y2="26.5" stroke="#b0b0b0" stroke-width="0.5"/><line x1="16" y1="2.9" x2="18.6" y2="2.9" stroke="#4472c4" stroke-width="0.8"/><line x1="19.6" y1="2.9" x2="22.2" y2="2.9" stroke="#ed7d31" stroke-width="0.8"/><line x1="24.4" y1="2.9" x2="27" y2="2.9" stroke="#a5a5a5" stroke-width="0.8"/></svg><svg class="abs" style="left:525.2px;top:61.9px" width="43.2" height="31" viewBox="0 0 43.6 31" preserveAspectRatio="none"><rect x="0.25" y="0.25" width="43.1" height="30.5" fill="#fff" stroke="#d2d2d2" stroke-width="0.5"/><line x1="3.2" y1="2.4" x2="3.2" y2="22.8" stroke="#d9d9d9" stroke-width="0.45"/><line x1="8.6" y1="2.4" x2="8.6" y2="22.8" stroke="#d9d9d9" stroke-width="0.45"/><line x1="14.0" y1="2.4" x2="14.0" y2="22.8" stroke="#d9d9d9" stroke-width="0.45"/><line x1="19.4" y1="2.4" x2="19.4" y2="22.8" stroke="#d9d9d9" stroke-width="0.45"/><line x1="24.8" y1="2.4" x2="24.8" y2="22.8" stroke="#d9d9d9" stroke-width="0.45"/><line x1="30.2" y1="2.4" x2="30.2" y2="22.8" stroke="#d9d9d9" stroke-width="0.45"/><line x1="35.6" y1="2.4" x2="35.6" y2="22.8" stroke="#d9d9d9" stroke-width="0.45"/><line x1="41.0" y1="2.4" x2="41.0" y2="22.8" stroke="#d9d9d9" stroke-width="0.45"/><line x1="3.2" y1="2.4" x2="41.0" y2="2.4" stroke="#d9d9d9" stroke-width="0.45"/><line x1="3.2" y1="5.8" x2="41.0" y2="5.8" stroke="#d9d9d9" stroke-width="0.45"/><line x1="3.2" y1="9.2" x2="41.0" y2="9.2" stroke="#d9d9d9" stroke-width="0.45"/><line x1="3.2" y1="12.6" x2="41.0" y2="12.6" stroke="#d9d9d9" stroke-width="0.45"/><line x1="3.2" y1="16.0" x2="41.0" y2="16.0" stroke="#d9d9d9" stroke-width="0.45"/><line x1="3.2" y1="19.4" x2="41.0" y2="19.4" stroke="#d9d9d9" stroke-width="0.45"/><line x1="3.2" y1="22.8" x2="41.0" y2="22.8" stroke="#d9d9d9" stroke-width="0.45"/><polyline points="9.7,6.2 10.3,8.1 10.9,8.2 11.4,8.6 12.0,9.1 12.5,9.4 13.1,9.8 13.7,11.7 14.2,12.0 14.8,12.9 15.3,12.5 15.9,14.2 16.5,15.3 17.0,16.2 17.6,15.1 18.2,13.8 18.7,14.4 19.3,14.4 19.8,14.1 20.4,14.3 21.0,14.4 21.5,15.0 22.1,15.1 22.7,15.1 23.2,13.4 23.8,10.0 24.3,10.6 24.9,12.5 25.5,12.6 26.0,13.3 26.6,14.7 27.0,15.2 27.6,16.2 28.1,17.4 28.7,12.7 29.3,13.5 29.8,12.8 30.4,13.0 30.9,13.4 31.5,13.6 32.0,13.9 32.4,15.0 33.0,15.1 33.6,16.1 34.1,13.5 34.7,12.1 35.3,13.2 35.8,13.4 36.4,15.3 36.9,14.7 37.5,14.3" fill="none" stroke="#4472c4" stroke-width="1" opacity="1"/><polyline points="9.7,6.5 10.3,7.3 10.9,8.3 11.4,7.9 12.0,8.3 12.5,8.1 13.1,9.2 13.7,10.3 14.2,10.7 14.8,10.9 15.3,11.1 15.9,12.2 16.5,12.4 17.0,13.7 17.6,14.1 18.2,13.1 18.7,13.5 19.3,14.1 19.8,13.6 20.4,14.3 21.0,10.4 21.5,11.1 22.1,11.6 22.7,12.2 23.2,9.3 23.8,8.2 24.3,9.3 24.9,11.1 25.5,10.9 26.0,11.6 26.6,12.9 27.0,13.6 27.6,14.5 28.1,15.4 28.7,11.2 29.3,12.4 29.8,21.5 30.4,21.7 30.9,18.2" fill="none" stroke="#ed7d31" stroke-width="1" opacity="1"/><polyline points="33.8,18.1 34.4,15.7 34.9,13.3 35.5,16.5 36.1,16.3 36.6,17.6 37.2,11.2 37.8,13.3" fill="none" stroke="#ed7d31" stroke-width="1" opacity="1"/><polyline points="9.7,8.1 10.3,9.0 10.9,7.4 11.4,6.3 12.0,9.7 12.6,11.7 13.1,16.7 13.7,13.5 14.2,13.8 14.8,13.6 15.4,13.9 15.9,14.5 16.5,13.8 17.1,13.0 17.6,14.1 18.2,15.0 18.7,15.7 19.3,15.9 19.9,15.7 20.4,16.1 21.0,13.5 21.6,11.9 22.1,8.8 22.7,13.6 23.2,12.9 23.8,12.0 24.4,13.0 24.9,14.8 25.5,15.0 26.0,15.6 26.6,16.1 27.0,10.6 27.6,12.2 28.1,19.1 28.7,15.1 29.3,15.4 29.8,15.4 30.4,15.0 30.9,15.2 31.5,16.1 32.0,9.3 32.4,11.2 33.0,14.9 33.6,15.9 34.1,15.0 34.7,14.4 35.3,15.6 35.8,15.3 36.4,16.9 36.9,16.1 37.5,10.1" fill="none" stroke="#a5a5a5" stroke-width="0.8" opacity="1"/><line x1="15.5" y1="1.3" x2="28.5" y2="1.3" stroke="#9a9a9a" stroke-width="0.6"/><line x1="0.6" y1="26.4" x2="3.2" y2="23.7" stroke="#b0b0b0" stroke-width="0.5"/><line x1="6.0" y1="26.4" x2="8.6" y2="23.7" stroke="#b0b0b0" stroke-width="0.5"/><line x1="11.4" y1="26.4" x2="14.0" y2="23.7" stroke="#b0b0b0" stroke-width="0.5"/><line x1="16.8" y1="26.4" x2="19.4" y2="23.7" stroke="#b0b0b0" stroke-width="0.5"/><line x1="22.2" y1="26.4" x2="24.8" y2="23.7" stroke="#b0b0b0" stroke-width="0.5"/><line x1="27.6" y1="26.4" x2="30.2" y2="23.7" stroke="#b0b0b0" stroke-width="0.5"/><line x1="33.0" y1="26.4" x2="35.6" y2="23.7" stroke="#b0b0b0" stroke-width="0.5"/><line x1="38.4" y1="26.4" x2="41.0" y2="23.7" stroke="#b0b0b0" stroke-width="0.5"/><line x1="16" y1="29.3" x2="18.6" y2="29.3" stroke="#4472c4" stroke-width="0.8"/><line x1="19.6" y1="29.3" x2="22.2" y2="29.3" stroke="#ed7d31" stroke-width="0.8"/><line x1="24.4" y1="29.3" x2="27" y2="29.3" stroke="#a5a5a5" stroke-width="0.8"/></svg>
<svg class="abs" style="left:0;top:0;will-change:transform" width="998" height="602" viewBox="0 0 998 602" font-family="Liberation Sans, sans-serif"><text x="11.6" y="26.8" font-size="8.2" fill="#dbeae1" textLength="32.0" lengthAdjust="spacingAndGlyphs">AutoSave</text>
<text x="51.8" y="26.3" font-size="7.4" fill="#217346" textLength="8.4" lengthAdjust="spacingAndGlyphs">On</text>
<text x="180.0" y="26.8" font-size="8.4" fill="#fff" textLength="180.6" lengthAdjust="spacingAndGlyphs">Stiles Color Report versus Memphis Cellulose Activity</text>
<text x="395.0" y="26.8" font-size="8.4" fill="#e4efe8" textLength="39.0" lengthAdjust="spacingAndGlyphs">CoM Public</text>
<text x="437.5" y="26.8" font-size="8.4" fill="#e4efe8" textLength="3.0" lengthAdjust="spacingAndGlyphs">•</text>
<text x="444.0" y="26.8" font-size="8.4" fill="#e4efe8" textLength="19.6" lengthAdjust="spacingAndGlyphs">Saved</text>
<text x="521.6" y="26.8" font-size="8.4" fill="#1e6a40" textLength="24.4" lengthAdjust="spacingAndGlyphs">Search</text>
<text x="722.5" y="26.8" font-size="8.4" fill="#fff" textLength="57.7" lengthAdjust="spacingAndGlyphs">Hudgins, Donald</text>
<text x="9.0" y="48.0" font-size="8.8" fill="#3b3a39" textLength="12.0" lengthAdjust="spacingAndGlyphs">File</text>
<text x="43.0" y="48.0" font-size="8.8" fill="#3b3a39" textLength="22.0" lengthAdjust="spacingAndGlyphs">Home</text>
<text x="83.0" y="48.0" font-size="8.8" fill="#3b3a39" textLength="22.0" lengthAdjust="spacingAndGlyphs">Insert</text>
<text x="124.0" y="48.0" font-size="8.8" fill="#3b3a39" textLength="46.0" lengthAdjust="spacingAndGlyphs">Page Layout</text>
<text x="189.0" y="48.0" font-size="8.8" fill="#3b3a39" textLength="35.0" lengthAdjust="spacingAndGlyphs">Formulas</text>
<text x="242.0" y="48.0" font-size="8.8" fill="#3b3a39" textLength="18.0" lengthAdjust="spacingAndGlyphs">Data</text>
<text x="278.0" y="48.0" font-size="8.8" fill="#3b3a39" textLength="27.0" lengthAdjust="spacingAndGlyphs">Review</text>
<text x="322.0" y="48.0" font-size="8.8" fill="#3b3a39" textLength="18.0" lengthAdjust="spacingAndGlyphs">View</text>
<text x="359.0" y="48.0" font-size="8.8" fill="#3b3a39" textLength="36.0" lengthAdjust="spacingAndGlyphs">Automate</text>
<text x="414.0" y="48.0" font-size="8.8" fill="#3b3a39" textLength="19.0" lengthAdjust="spacingAndGlyphs">Help</text>
<text x="450.0" y="48.0" font-size="8.8" fill="#3b3a39" textLength="16.0" lengthAdjust="spacingAndGlyphs">EDS</text>
<text x="484.0" y="48.0" font-size="8.8" fill="#3b3a39" textLength="44.0" lengthAdjust="spacingAndGlyphs">Power Pivot</text>
<text x="548.0" y="48.0" font-size="8.8" fill="#3b3a39" textLength="25.0" lengthAdjust="spacingAndGlyphs">ArcGIS</text>
<text x="591.0" y="48.0" font-size="8.8" fill="#185c37" textLength="50.0" lengthAdjust="spacingAndGlyphs" stroke="#185c37" stroke-width="0.25">Chart Design</text>
<text x="659.0" y="48.0" font-size="8.8" fill="#217346" textLength="27.0" lengthAdjust="spacingAndGlyphs">Format</text>
<text x="813.9" y="47.9" font-size="8.6" fill="#217346" textLength="42.1" lengthAdjust="spacingAndGlyphs" font-weight="bold">Comments</text>
<text x="883.0" y="47.9" font-size="8.6" fill="#217346" textLength="21.8" lengthAdjust="spacingAndGlyphs" font-weight="bold">Share</text>
<text x="4.4" y="88.9" font-size="8.2" fill="#3d3d3d" textLength="34.7" lengthAdjust="spacingAndGlyphs">Add Chart</text>
<text x="5.0" y="99.1" font-size="8.2" fill="#3d3d3d" textLength="26.0" lengthAdjust="spacingAndGlyphs">Element</text>
<text x="47.5" y="88.9" font-size="8.2" fill="#3d3d3d" textLength="20.0" lengthAdjust="spacingAndGlyphs">Quick</text>
<text x="42.5" y="99.1" font-size="8.2" fill="#3d3d3d" textLength="23.0" lengthAdjust="spacingAndGlyphs">Layout</text>
<text x="87.5" y="88.9" font-size="8.2" fill="#3d3d3d" textLength="26.5" lengthAdjust="spacingAndGlyphs">Change</text>
<text x="86.8" y="99.1" font-size="8.2" fill="#3d3d3d" textLength="20.7" lengthAdjust="spacingAndGlyphs">Colors</text>
<text x="16.3" y="113.8" font-size="8.2" fill="#3d3d3d" textLength="44.5" lengthAdjust="spacingAndGlyphs">Chart Layouts</text>
<text x="316.0" y="113.8" font-size="8.2" fill="#3d3d3d" textLength="38.0" lengthAdjust="spacingAndGlyphs">Chart Styles</text>
<text x="598.0" y="88.9" font-size="8.2" fill="#3d3d3d" textLength="41.6" lengthAdjust="spacingAndGlyphs">Switch Row/</text>
<text x="605.6" y="99.1" font-size="8.2" fill="#3d3d3d" textLength="27.4" lengthAdjust="spacingAndGlyphs">Column</text>
<text x="646.0" y="88.9" font-size="8.2" fill="#3d3d3d" textLength="19.6" lengthAdjust="spacingAndGlyphs">Select</text>
<text x="648.6" y="99.1" font-size="8.2" fill="#3d3d3d" textLength="14.4" lengthAdjust="spacingAndGlyphs">Data</text>
<text x="686.6" y="88.9" font-size="8.2" fill="#3d3d3d" textLength="25.8" lengthAdjust="spacingAndGlyphs">Change</text>
<text x="681.4" y="99.1" font-size="8.2" fill="#3d3d3d" textLength="36.0" lengthAdjust="spacingAndGlyphs">Chart Type</text>
<text x="733.6" y="88.9" font-size="8.2" fill="#3d3d3d" textLength="18.8" lengthAdjust="spacingAndGlyphs">Move</text>
<text x="734.0" y="99.1" font-size="8.2" fill="#3d3d3d" textLength="17.6" lengthAdjust="spacingAndGlyphs">Chart</text>
<text x="625.6" y="113.8" font-size="8.2" fill="#3d3d3d" textLength="14.0" lengthAdjust="spacingAndGlyphs">Data</text>
<text x="692.4" y="113.8" font-size="8.2" fill="#3d3d3d" textLength="13.6" lengthAdjust="spacingAndGlyphs">Type</text>
<text x="729.0" y="113.8" font-size="8.2" fill="#3d3d3d" textLength="27.6" lengthAdjust="spacingAndGlyphs">Location</text>
<text x="141.6" y="134.6" font-size="10" fill="#444" textLength="7.4" lengthAdjust="spacingAndGlyphs" font-weight="bold" font-style="italic" font-family="Liberation Serif, serif">fx</text>
<text x="71.7" y="548.4" font-size="8.8" fill="#444" textLength="22.3" lengthAdjust="spacingAndGlyphs">Points</text>
<text x="111.0" y="548.4" font-size="8.8" fill="#217346" textLength="94.7" lengthAdjust="spacingAndGlyphs" font-weight="bold">1.18.2025 thru ________</text>
<text x="222.7" y="548.4" font-size="8.8" fill="#444" textLength="90.6" lengthAdjust="spacingAndGlyphs">1.12.2025 thru 1.18.2025</text>
<text x="336.7" y="548.4" font-size="8.8" fill="#444" textLength="95.0" lengthAdjust="spacingAndGlyphs">12.24.2024 thru 1.12.2025</text>
<text x="452.3" y="548.4" font-size="8.8" fill="#444" textLength="59.4" lengthAdjust="spacingAndGlyphs">12.18 thru 12.24</text>
<text x="516.7" y="548.4" font-size="8.8" fill="#217346" textLength="7.3" lengthAdjust="spacingAndGlyphs" font-weight="bold">...</text>
<text x="5.0" y="565.4" font-size="8.0" fill="#444" textLength="20.0" lengthAdjust="spacingAndGlyphs">Ready</text>
<text x="50.0" y="565.4" font-size="8.0" fill="#444" textLength="78.3" lengthAdjust="spacingAndGlyphs">Accessibility: Investigate</text>
<text x="908.9" y="564.6" font-size="7.8" fill="#555" textLength="13.6" lengthAdjust="spacingAndGlyphs">90%</text>
<text x="55.0" y="585.2" font-size="9.5" fill="#3a3a3a" textLength="82.0" lengthAdjust="spacingAndGlyphs">Type here to search</text>
<text x="860.0" y="579.2" font-size="8.2" fill="#fff" textLength="26.8" lengthAdjust="spacingAndGlyphs">1:03 PM</text>
<text x="856.9" y="590.7" font-size="8.2" fill="#fff" textLength="33.1" lengthAdjust="spacingAndGlyphs">1/23/2025</text>
</svg>
<svg class="abs" style="left:457.6px;top:46.4px" width="9.6" height="13.6" viewBox="0 0 12 17"><path d="M1 1 L1 13.2 L3.9 10.5 L6 15.4 L8 14.5 L5.9 9.8 L9.8 9.8 Z" fill="#fff" stroke="#111" stroke-width="0.9" stroke-linejoin="round"/></svg>
</body></html>
